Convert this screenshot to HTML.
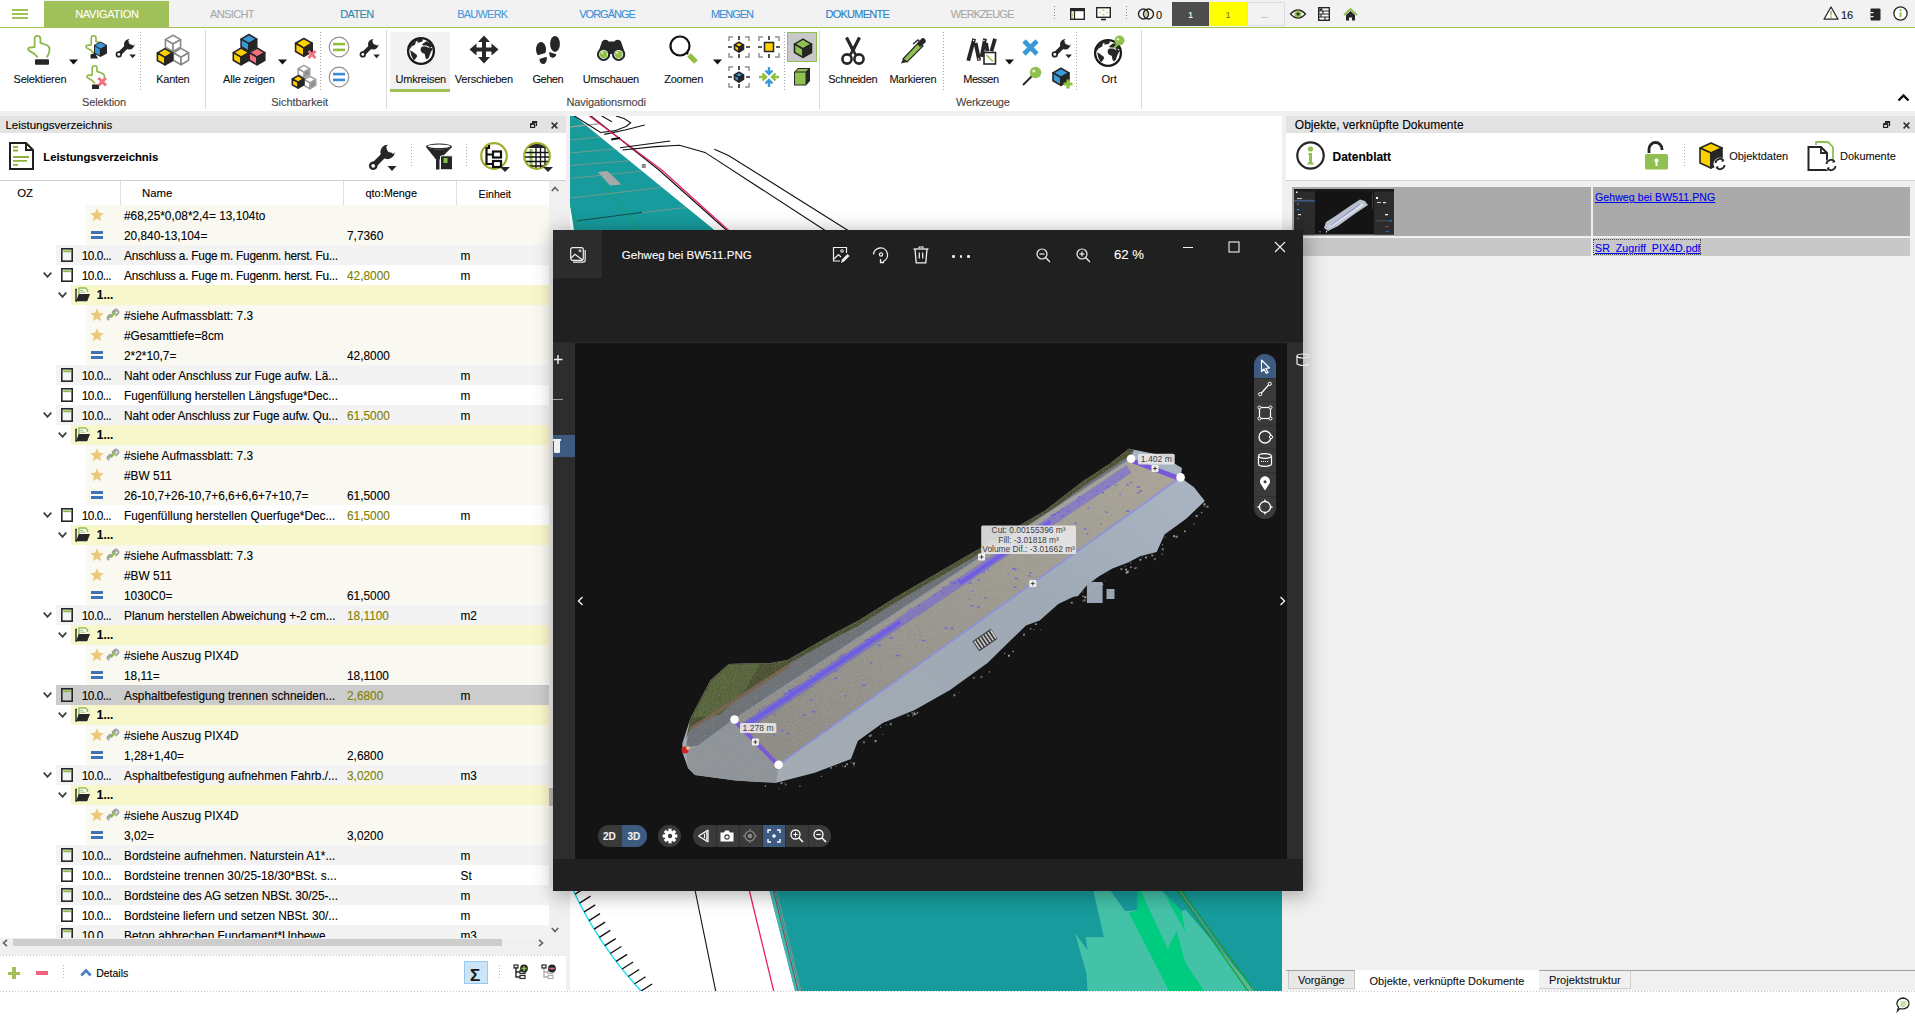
<!DOCTYPE html>
<html><head><meta charset="utf-8"><style>
html,body{margin:0;padding:0;}
body{width:1915px;height:1017px;overflow:hidden;position:relative;background:#fff;font-family:"Liberation Sans",sans-serif;}
.r{position:absolute;}
.t{position:absolute;white-space:nowrap;line-height:1;-webkit-text-stroke:0.1px currentColor;}
svg.r{overflow:visible;}
</style></head><body>
<svg width="0" height="0" style="position:absolute"><defs>
<symbol id="star" viewBox="0 0 14 14"><path d="M7 0.3 L8.9 4.8 L13.7 5.2 L10 8.4 L11.2 13.3 L7 10.6 L2.8 13.3 L4 8.4 L0.3 5.2 L5.1 4.8 Z" fill="#ecc87a"/></symbol>
<symbol id="link" viewBox="0 0 14 14"><path d="M3.2 12.3 L1.7 10.8 Q1 9.6 2 8.6 L4.6 6" stroke="#9a9a9a" stroke-width="1.6" fill="none"/><path d="M9.4 8 L12 5.4 Q13 4.4 12.3 3.2 L10.8 1.7 Q9.6 1 8.6 2 L6 4.6" stroke="#9a9a9a" stroke-width="1.6" fill="none"/><path d="M3.6 10.4 Q2.8 9.8 3.6 9 L9 3.6 Q9.8 2.8 10.4 3.6" stroke="#9a9a9a" stroke-width="1.4" fill="none"/><path d="M4.5 9.5 L9.5 4.5" stroke="#8cc04a" stroke-width="2.2"/></symbol>
<symbol id="chev" viewBox="0 0 9 6"><path d="M0.7 0.7 L4.5 4.8 L8.3 0.7" stroke="#404040" stroke-width="1.8" fill="none"/></symbol>
<symbol id="doc" viewBox="0 0 12 14"><rect x="0.8" y="0.8" width="10.4" height="12.4" fill="none" stroke="#262626" stroke-width="1.6"/><rect x="2.2" y="2.4" width="7.6" height="1.8" fill="#90b848"/></symbol>
<symbol id="folder" viewBox="0 0 16 15"><path d="M4 10 V1 H10.5 L12.5 3 V5" stroke="#90c050" stroke-width="1.4" fill="#fff"/><path d="M5.3 3.4 H8 M5.3 5.2 H10.5" stroke="#90c050" stroke-width="1"/><path d="M2 2.5 H1 V14 H2" stroke="#262626" stroke-width="1.4" fill="none"/><path d="M3.8 7 H15 L12.2 14.2 H1 Z" fill="#262626"/></symbol>
</defs></svg>
<div class="r" style="left:0px;top:0px;width:1915px;height:27px;background:#f2f2f2;"></div><div class="r" style="left:0px;top:0px;width:44px;height:27px;background:#ffffff;"></div><div class="r" style="left:0px;top:27px;width:1915px;height:1px;background:#a0c05a;"></div><div class="r" style="left:44px;top:1px;width:125px;height:27px;background:#a0c05a;"></div><div class="r" style="left:12px;top:9px;width:16px;height:2px;background:#a0c05a;"></div><div class="r" style="left:12px;top:13px;width:16px;height:2px;background:#a0c05a;"></div><div class="r" style="left:12px;top:17px;width:16px;height:2px;background:#a0c05a;"></div><div class="t" style="left:75.2px;top:8.59px;font-size:11px;color:#ffffff;font-weight:normal;letter-spacing:-0.271px;">NAVIGATION</div><div class="t" style="left:209.9px;top:8.59px;font-size:11px;color:#a8a8a8;font-weight:normal;letter-spacing:-0.597px;">ANSICHT</div><div class="t" style="left:340.2px;top:8.59px;font-size:11px;color:#2a8aa8;font-weight:normal;letter-spacing:-0.593px;">DATEN</div><div class="t" style="left:457.2px;top:8.59px;font-size:11px;color:#4a9ae0;font-weight:normal;letter-spacing:-0.774px;">BAUWERK</div><div class="t" style="left:579.2px;top:8.59px;font-size:11px;color:#3a8fd8;font-weight:normal;letter-spacing:-0.971px;">VORGÄNGE</div><div class="t" style="left:710.9px;top:8.59px;font-size:11px;color:#3a8fd8;font-weight:normal;letter-spacing:-1.030px;">MENGEN</div><div class="t" style="left:825.5px;top:8.59px;font-size:11px;color:#2d80c8;font-weight:normal;letter-spacing:-0.753px;">DOKUMENTE</div><div class="t" style="left:950.8px;top:8.59px;font-size:11px;color:#a8a8a8;font-weight:normal;letter-spacing:-0.933px;">WERKZEUGE</div><div class="r" style="left:0px;top:28px;width:1915px;height:83px;background:#ffffff;"></div><div class="r" style="left:0px;top:111px;width:1915px;height:5px;background:#f0f0f0;"></div><div class="r" style="left:205px;top:30px;width:1px;height:79px;background:#dadada;"></div><div class="r" style="left:386px;top:30px;width:1px;height:79px;background:#dadada;"></div><div class="r" style="left:819px;top:30px;width:1px;height:79px;background:#dadada;"></div><div class="r" style="left:1141px;top:30px;width:1px;height:79px;background:#dadada;"></div><div class="r" style="left:140px;top:32px;width:1px;height:58px;background:repeating-linear-gradient(to bottom,#a8a8a8 0 1px,transparent 1px 3px)"></div><div class="r" style="left:320px;top:32px;width:1px;height:58px;background:repeating-linear-gradient(to bottom,#a8a8a8 0 1px,transparent 1px 3px)"></div><div class="r" style="left:784px;top:32px;width:1px;height:58px;background:repeating-linear-gradient(to bottom,#a8a8a8 0 1px,transparent 1px 3px)"></div><div class="r" style="left:943px;top:32px;width:1px;height:58px;background:repeating-linear-gradient(to bottom,#a8a8a8 0 1px,transparent 1px 3px)"></div><div class="r" style="left:1076px;top:32px;width:1px;height:58px;background:repeating-linear-gradient(to bottom,#a8a8a8 0 1px,transparent 1px 3px)"></div><div class="r" style="left:390px;top:32px;width:60px;height:57px;background:#f2f2f2;"></div><div class="r" style="left:390px;top:88.7px;width:60px;height:3px;background:#a0c05a;"></div><div class="t" style="left:13.6px;top:73.99px;font-size:11px;color:#111;font-weight:normal;letter-spacing:-0.212px;">Selektieren</div><div class="t" style="left:156.3px;top:73.99px;font-size:11px;color:#111;font-weight:normal;letter-spacing:-0.294px;">Kanten</div><div class="t" style="left:223px;top:73.99px;font-size:11px;color:#111;font-weight:normal;letter-spacing:-0.192px;">Alle zeigen</div><div class="t" style="left:395.5px;top:73.99px;font-size:11px;color:#111;font-weight:normal;letter-spacing:-0.230px;">Umkreisen</div><div class="t" style="left:454.8px;top:73.99px;font-size:11px;color:#111;font-weight:normal;letter-spacing:-0.222px;">Verschieben</div><div class="t" style="left:532.6px;top:73.99px;font-size:11px;color:#111;font-weight:normal;letter-spacing:-0.525px;">Gehen</div><div class="t" style="left:582.8px;top:73.99px;font-size:11px;color:#111;font-weight:normal;letter-spacing:-0.288px;">Umschauen</div><div class="t" style="left:664.3px;top:73.99px;font-size:11px;color:#111;font-weight:normal;letter-spacing:-0.276px;">Zoomen</div><div class="t" style="left:828.3px;top:73.99px;font-size:11px;color:#111;font-weight:normal;letter-spacing:-0.343px;">Schneiden</div><div class="t" style="left:889.4px;top:73.99px;font-size:11px;color:#111;font-weight:normal;letter-spacing:-0.223px;">Markieren</div><div class="t" style="left:963.3px;top:73.99px;font-size:11px;color:#111;font-weight:normal;letter-spacing:-0.553px;">Messen</div><div class="t" style="left:1101.4px;top:73.99px;font-size:11px;color:#111;font-weight:normal;letter-spacing:0.008px;">Ort</div><div class="t" style="left:82px;top:97.09px;font-size:11px;color:#444;font-weight:normal;letter-spacing:-0.139px;">Selektion</div><div class="t" style="left:271.3px;top:97.09px;font-size:11px;color:#444;font-weight:normal;letter-spacing:-0.064px;">Sichtbarkeit</div><div class="t" style="left:566.5px;top:97.09px;font-size:11px;color:#444;font-weight:normal;letter-spacing:-0.141px;">Navigationsmodi</div><div class="t" style="left:956.1px;top:97.09px;font-size:11px;color:#444;font-weight:normal;letter-spacing:-0.204px;">Werkzeuge</div><svg class="r" style="left:69px;top:58.5px" width="9" height="6" viewBox="0 0 9 6"><path d="M0 0.5 H9 L4.5 5.5 Z" fill="#111"/></svg><svg class="r" style="left:278px;top:58.5px" width="9" height="6" viewBox="0 0 9 6"><path d="M0 0.5 H9 L4.5 5.5 Z" fill="#111"/></svg><svg class="r" style="left:713px;top:58.5px" width="9" height="6" viewBox="0 0 9 6"><path d="M0 0.5 H9 L4.5 5.5 Z" fill="#111"/></svg><svg class="r" style="left:1005px;top:58.5px" width="9" height="6" viewBox="0 0 9 6"><path d="M0 0.5 H9 L4.5 5.5 Z" fill="#111"/></svg><svg class="r" style="left:27px;top:35px" width="24" height="30" viewBox="0 0 24 30"><path d="M10.7 22.4 L7.2 18.6 Q3.5 16.8 1.5 15 Q0.5 13.2 2.5 12.6 L7.6 12 V3.8 Q7.6 0.9 10.5 0.9 Q13.4 0.9 13.4 3.8 V7.8 L19.6 10 Q22.6 11.3 22.6 14.5 Q22.4 18.5 19.8 22.4" fill="none" stroke="#90b848" stroke-width="1.8" stroke-linejoin="round"/><rect x="8" y="24.3" width="14" height="5.5" rx="1" fill="#262626"/></svg><svg class="r" style="left:85px;top:35px" width="23" height="24" viewBox="0 0 23 24"><g transform="scale(0.82)"><path d="M10.7 22.4 L7.2 18.6 Q3.5 16.8 1.5 15 Q0.5 13.2 2.5 12.6 L7.6 12 V3.8 Q7.6 0.9 10.5 0.9 Q13.4 0.9 13.4 3.8 V7.8 L19.6 10 Q22.6 11.3 22.6 14.5 Q22.4 18.5 19.8 22.4" fill="none" stroke="#90b848" stroke-width="2" stroke-linejoin="round"/></g><path d="M5.5 23.5 V19.5 L10 18 L13 23.5 Z" fill="#262626"/><path d="M9 10 L15.5 6.5 L22 10 V18.5 L15.5 22 L9 18.5 Z" fill="#262626"/><path d="M10 10.5 L15.5 7.5 L21 10.5 L15.5 13.5 Z" fill="#3a9ad8"/><path d="M10 11.5 L14.8 14.2 V20.5 L10 17.8 Z" fill="#3a9ad8"/></svg><svg class="r" style="left:86px;top:65px" width="22" height="24" viewBox="0 0 22 24"><g transform="scale(0.82)"><path d="M10.7 22.4 L7.2 18.6 Q3.5 16.8 1.5 15 Q0.5 13.2 2.5 12.6 L7.6 12 V3.8 Q7.6 0.9 10.5 0.9 Q13.4 0.9 13.4 3.8 V7.8 L19.6 10 Q22.6 11.3 22.6 14.5 Q22.4 18.5 19.8 22.4" fill="none" stroke="#90b848" stroke-width="2" stroke-linejoin="round"/></g><rect x="6" y="19.5" width="7" height="4.5" fill="#262626"/><path d="M12.5 13 L20 20.5 M20 13 L12.5 20.5" stroke="#f07080" stroke-width="3"/></svg><svg class="r" style="left:115px;top:37px" width="22" height="23" viewBox="0 0 22 23"><g transform="scale(0.733)"><path d="M5.5 23.5 L15 14" stroke="#262626" stroke-width="5.5" stroke-linecap="round"/><circle cx="5.2" cy="23.8" r="4.3" fill="#262626"/><circle cx="5.2" cy="23.8" r="1.9" fill="#fff"/><circle cx="19.5" cy="10" r="7.2" fill="#262626"/><circle cx="23" cy="6.3" r="4.3" fill="#fff"/><path d="M22 1 L29 8 L25 12 L18 5 Z" fill="#fff"/><path d="M19.5 24 H28.5 L24 29 Z" fill="#262626"/></g></svg><svg class="r" style="left:359px;top:37px" width="22" height="23" viewBox="0 0 22 23"><g transform="scale(0.733)"><path d="M5.5 23.5 L15 14" stroke="#262626" stroke-width="5.5" stroke-linecap="round"/><circle cx="5.2" cy="23.8" r="4.3" fill="#262626"/><circle cx="5.2" cy="23.8" r="1.9" fill="#fff"/><circle cx="19.5" cy="10" r="7.2" fill="#262626"/><circle cx="23" cy="6.3" r="4.3" fill="#fff"/><path d="M22 1 L29 8 L25 12 L18 5 Z" fill="#fff"/><path d="M19.5 24 H28.5 L24 29 Z" fill="#262626"/></g></svg><svg class="r" style="left:1051px;top:37px" width="22" height="23" viewBox="0 0 22 23"><g transform="scale(0.733)"><path d="M5.5 23.5 L15 14" stroke="#262626" stroke-width="5.5" stroke-linecap="round"/><circle cx="5.2" cy="23.8" r="4.3" fill="#262626"/><circle cx="5.2" cy="23.8" r="1.9" fill="#fff"/><circle cx="19.5" cy="10" r="7.2" fill="#262626"/><circle cx="23" cy="6.3" r="4.3" fill="#fff"/><path d="M22 1 L29 8 L25 12 L18 5 Z" fill="#fff"/><path d="M19.5 24 H28.5 L24 29 Z" fill="#262626"/></g></svg><svg class="r" style="left:156px;top:34px" width="34" height="32" viewBox="0 0 34 32"><polygon points="17,1.184000000000001 24.6,5.5920000000000005 17,10 9.4,5.5920000000000005" fill="#fff" stroke="#8a8a8a" stroke-width="1.6" stroke-linejoin="round"/><polygon points="9.4,5.5920000000000005 17,10 17,17.4936 9.4,13.0856" fill="#fff" stroke="#8a8a8a" stroke-width="1.6" stroke-linejoin="round"/><polygon points="24.6,5.5920000000000005 17,10 17,17.4936 24.6,13.0856" fill="#fff" stroke="#8a8a8a" stroke-width="1.6" stroke-linejoin="round"/><polygon points="25,14.384 32.6,18.792 25,23.2 17.4,18.792" fill="#fff" stroke="#8a8a8a" stroke-width="1.6" stroke-linejoin="round"/><polygon points="17.4,18.792 25,23.2 25,30.693599999999996 17.4,26.2856" fill="#fff" stroke="#8a8a8a" stroke-width="1.6" stroke-linejoin="round"/><polygon points="32.6,18.792 25,23.2 25,30.693599999999996 32.6,26.2856" fill="#fff" stroke="#8a8a8a" stroke-width="1.6" stroke-linejoin="round"/><polygon points="9,14.584 16.6,18.991999999999997 9,23.4 1.4000000000000004,18.991999999999997" fill="#ffd000" stroke="#262626" stroke-width="1.6" stroke-linejoin="round"/><polygon points="1.4000000000000004,18.991999999999997 9,23.4 9,30.8936 1.4000000000000004,26.485599999999998" fill="#ffd000" stroke="#262626" stroke-width="1.6" stroke-linejoin="round"/><polygon points="16.6,18.991999999999997 9,23.4 9,30.8936 16.6,26.485599999999998" fill="#262626" stroke="#262626" stroke-width="1.6" stroke-linejoin="round"/></svg><svg class="r" style="left:232px;top:34px" width="34" height="32" viewBox="0 0 34 32"><polygon points="16.9,0.5519999999999996 24.7,5.076 16.9,9.6 9.099999999999998,5.076" fill="#3a9ad8" stroke="#262626" stroke-width="1.6" stroke-linejoin="round"/><polygon points="9.099999999999998,5.076 16.9,9.6 16.9,17.290799999999997 9.099999999999998,12.7668" fill="#3a9ad8" stroke="#262626" stroke-width="1.6" stroke-linejoin="round"/><polygon points="24.7,5.076 16.9,9.6 16.9,17.290799999999997 24.7,12.7668" fill="#262626" stroke="#262626" stroke-width="1.6" stroke-linejoin="round"/><polygon points="9.1,14.052000000000001 16.9,18.576 9.1,23.1 1.2999999999999998,18.576" fill="#ffd000" stroke="#262626" stroke-width="1.6" stroke-linejoin="round"/><polygon points="1.2999999999999998,18.576 9.1,23.1 9.1,30.7908 1.2999999999999998,26.2668" fill="#ffd000" stroke="#262626" stroke-width="1.6" stroke-linejoin="round"/><polygon points="16.9,18.576 9.1,23.1 9.1,30.7908 16.9,26.2668" fill="#262626" stroke="#262626" stroke-width="1.6" stroke-linejoin="round"/><polygon points="25,14.052000000000001 32.8,18.576 25,23.1 17.2,18.576" fill="#f07080" stroke="#262626" stroke-width="1.6" stroke-linejoin="round"/><polygon points="17.2,18.576 25,23.1 25,30.7908 17.2,26.2668" fill="#f07080" stroke="#262626" stroke-width="1.6" stroke-linejoin="round"/><polygon points="32.8,18.576 25,23.1 25,30.7908 32.8,26.2668" fill="#262626" stroke="#262626" stroke-width="1.6" stroke-linejoin="round"/></svg><svg class="r" style="left:295px;top:37px" width="22" height="22" viewBox="0 0 22 22"><polygon points="8.9,1.4719999999999995 17.200000000000003,6.286 8.9,11.1 0.5999999999999996,6.286" fill="#ffd000" stroke="#262626" stroke-width="1.6" stroke-linejoin="round"/><polygon points="0.5999999999999996,6.286 8.9,11.1 8.9,19.2838 0.5999999999999996,14.4698" fill="#ffd000" stroke="#262626" stroke-width="1.6" stroke-linejoin="round"/><polygon points="17.200000000000003,6.286 8.9,11.1 8.9,19.2838 17.200000000000003,14.4698" fill="#262626" stroke="#262626" stroke-width="1.6" stroke-linejoin="round"/><path d="M13.5 14 L20.5 21 M20.5 14 L13.5 21" stroke="#f07080" stroke-width="2.6"/></svg><svg class="r" style="left:292px;top:65px" width="25" height="24" viewBox="0 0 25 24"><polygon points="11.9,0.3719999999999999 17.7,3.7359999999999998 11.9,7.1 6.1000000000000005,3.7359999999999998" fill="#fff" stroke="#a0a0a0" stroke-width="1.6" stroke-linejoin="round"/><polygon points="6.1000000000000005,3.7359999999999998 11.9,7.1 11.9,12.8188 6.1000000000000005,9.454799999999999" fill="#fff" stroke="#a0a0a0" stroke-width="1.6" stroke-linejoin="round"/><polygon points="17.7,3.7359999999999998 11.9,7.1 11.9,12.8188 17.7,9.454799999999999" fill="#909090" stroke="#a0a0a0" stroke-width="1.6" stroke-linejoin="round"/><polygon points="17.9,11.272 23.7,14.636 17.9,18 12.099999999999998,14.636" fill="#fff" stroke="#a0a0a0" stroke-width="1.6" stroke-linejoin="round"/><polygon points="12.099999999999998,14.636 17.9,18 17.9,23.7188 12.099999999999998,20.3548" fill="#fff" stroke="#a0a0a0" stroke-width="1.6" stroke-linejoin="round"/><polygon points="23.7,14.636 17.9,18 17.9,23.7188 23.7,20.3548" fill="#909090" stroke="#a0a0a0" stroke-width="1.6" stroke-linejoin="round"/><polygon points="6.1,10.671999999999999 11.899999999999999,14.035999999999998 6.1,17.4 0.2999999999999998,14.035999999999998" fill="#ffd000" stroke="#262626" stroke-width="1.6" stroke-linejoin="round"/><polygon points="0.2999999999999998,14.035999999999998 6.1,17.4 6.1,23.1188 0.2999999999999998,19.7548" fill="#ffd000" stroke="#262626" stroke-width="1.6" stroke-linejoin="round"/><polygon points="11.899999999999999,14.035999999999998 6.1,17.4 6.1,23.1188 11.899999999999999,19.7548" fill="#262626" stroke="#262626" stroke-width="1.6" stroke-linejoin="round"/></svg><svg class="r" style="left:328px;top:36px" width="22" height="22" viewBox="0 0 22 22"><circle cx="11" cy="11" r="9.8" fill="#fff" stroke="#909090" stroke-width="1.2"/><rect x="5" y="6.8" width="12" height="2.6" fill="#90c040"/><rect x="5" y="12.6" width="12" height="2.6" fill="#90c040"/></svg><svg class="r" style="left:328px;top:66px" width="22" height="22" viewBox="0 0 22 22"><circle cx="11" cy="11" r="9.8" fill="#fff" stroke="#909090" stroke-width="1.2"/><rect x="5" y="6.8" width="12" height="2.6" fill="#3a8ad8"/><rect x="5" y="12.6" width="12" height="2.6" fill="#3a8ad8"/></svg><svg class="r" style="left:407px;top:37px" width="28" height="28" viewBox="0 0 28 28"><circle cx="14" cy="14" r="12.9" fill="#fff" stroke="#1a1a1a" stroke-width="2.3"/><path d="M1.8 12.5 L3.2 8.5 L6 5 L10 2 L15 1.5 L15.8 3.2 L15 4.7 L10.6 5.8 L10.2 3.5 L8.7 5.1 L8.2 7.4 L4.5 9.5 L2.7 12.6 Z" fill="#262626"/><path d="M3.1 13.3 L5.3 14.4 L9.4 17.4 L10.2 19.3 L8.3 21.9 L6.8 23.4 L4.2 18.2 Z" fill="#262626"/><path d="M13.9 10.7 L15.4 9.6 L19.2 9.6 L21.4 10.7 L22.9 9.9 L25.9 11.8 L24 14.8 L22.9 17.4 L21.8 20.8 L19.9 22.6 L18.4 20.4 L17.7 16.7 L15.4 15.9 L13.6 13.7 Z" fill="#262626"/><path d="M15 7.3 L17.3 5.8 L19.2 4.3 L22.1 5.5 L25.1 7.3 L25.9 9.9 L22.9 9.9 L19.2 8.4 L16.2 8.4 Z" fill="#262626"/></svg><svg class="r" style="left:469px;top:35px" width="30" height="29" viewBox="0 0 30 29"><path d="M15 0.5 L21 7 H17 V12.5 H22.5 V8.5 L29.5 14.5 L22.5 20.5 V16.5 H17 V22 H21 L15 28.5 L9 22 H13 V16.5 H7.5 V20.5 L0.5 14.5 L7.5 8.5 V12.5 H13 V7 H9 Z" fill="#262626"/></svg><svg class="r" style="left:536px;top:35px" width="25" height="30" viewBox="0 0 25 30"><ellipse cx="5" cy="14.5" rx="5" ry="7.6" fill="#262626"/><path d="M-1 21 L11 17.5 L11 23 L-1 23 Z" fill="#fff"/><path d="M3.4 24 L10.6 21.8 Q11.5 26 9 28.5 Q6 30 4 27 Z" fill="#262626"/><ellipse cx="19" cy="8.9" rx="4.9" ry="8" fill="#262626"/><path d="M13 15.5 L25 19 L25 22 L13 22 Z" fill="#fff"/><path d="M13.2 17 L20.4 19.3 Q19.5 22.5 16.5 22.8 Q13 22.5 13.2 17 Z" fill="#262626"/></svg><svg class="r" style="left:597px;top:39px" width="29" height="23" viewBox="0 0 29 23"><path d="M0.8 15 L5 2.5 Q6.5 0.4 8.5 0.8 Q11 0.8 11.5 2.6 L17.5 2.6 Q18 0.8 20.5 0.8 Q22.5 0.4 24 2.5 L28.2 15 Z" fill="#262626"/><circle cx="6.6" cy="15.4" r="6.6" fill="#262626"/><circle cx="21.6" cy="15.4" r="6.6" fill="#262626"/><circle cx="6.6" cy="15.4" r="4.5" fill="#fff"/><circle cx="21.6" cy="15.4" r="4.5" fill="#fff"/><circle cx="6.6" cy="15.4" r="3.7" fill="#90c040"/><circle cx="21.6" cy="15.4" r="3.7" fill="#90c040"/><circle cx="5.2" cy="13.8" r="1" fill="#e8f4d8"/><circle cx="20.2" cy="13.8" r="1" fill="#e8f4d8"/></svg><svg class="r" style="left:669px;top:35px" width="30" height="30" viewBox="0 0 30 30"><circle cx="11" cy="11" r="9.5" fill="none" stroke="#111" stroke-width="2.2"/><path d="M17.5 17.5 L19 19" stroke="#111" stroke-width="2.5"/><path d="M20 20 L27 27" stroke="#90c040" stroke-width="5.2"/></svg><svg class="r" style="left:728px;top:36px" width="22" height="22" viewBox="0 0 22 22"><path d="M1 5 V1 H5 M17 1 H21 V5 M21 17 V21 H17 M5 21 H1 V17" stroke="#909090" stroke-width="1.5" fill="none"/><path d="M11 0 V4 M11 18 V22 M0 11 H4 M18 11 H22" stroke="#262626" stroke-width="1.6"/><polygon points="11,6.28 15.5,8.89 11,11.5 6.5,8.89" fill="#ffd000" stroke="#262626" stroke-width="1.6" stroke-linejoin="round"/><polygon points="6.5,8.89 11,11.5 11,15.937 6.5,13.327" fill="#ffd000" stroke="#262626" stroke-width="1.6" stroke-linejoin="round"/><polygon points="15.5,8.89 11,11.5 11,15.937 15.5,13.327" fill="#262626" stroke="#262626" stroke-width="1.6" stroke-linejoin="round"/></svg><svg class="r" style="left:758px;top:36px" width="22" height="22" viewBox="0 0 22 22"><path d="M1 5 V1 H5 M17 1 H21 V5 M21 17 V21 H17 M5 21 H1 V17" stroke="#909090" stroke-width="1.5" fill="none"/><path d="M11 0 V4 M11 18 V22 M0 11 H4 M18 11 H22" stroke="#262626" stroke-width="1.6"/><rect x="6.5" y="6.5" width="9" height="9" fill="#ffd000" stroke="#262626" stroke-width="1.5"/></svg><svg class="r" style="left:728px;top:66px" width="22" height="22" viewBox="0 0 22 22"><path d="M1 5 V1 H5 M17 1 H21 V5 M21 17 V21 H17 M5 21 H1 V17" stroke="#909090" stroke-width="1.5" fill="none"/><path d="M11 0 V4 M11 18 V22 M0 11 H4 M18 11 H22" stroke="#262626" stroke-width="1.6"/><polygon points="11,6.28 15.5,8.89 11,11.5 6.5,8.89" fill="#3a9ad8" stroke="#262626" stroke-width="1.6" stroke-linejoin="round"/><polygon points="6.5,8.89 11,11.5 11,15.937 6.5,13.327" fill="#3a9ad8" stroke="#262626" stroke-width="1.6" stroke-linejoin="round"/><polygon points="15.5,8.89 11,11.5 11,15.937 15.5,13.327" fill="#262626" stroke="#262626" stroke-width="1.6" stroke-linejoin="round"/></svg><svg class="r" style="left:758px;top:66px" width="22" height="22" viewBox="0 0 22 22"><path d="M11 1 V8 M7.5 4.5 L11 8 L14.5 4.5 M11 21 V14 M7.5 17.5 L11 14 L14.5 17.5" stroke="#3a9ad8" stroke-width="2.4" fill="none"/><path d="M1 11 H8 M4.5 7.5 L8 11 L4.5 14.5 M21 11 H14 M17.5 7.5 L14 11 L17.5 14.5" stroke="#90c040" stroke-width="2.4" fill="none"/></svg><div class="r" style="left:787px;top:32px;width:30px;height:30px;background:#c8c8c8;box-sizing:border-box;border:1px solid #90c050"></div><svg class="r" style="left:792px;top:37px" width="22" height="22" viewBox="0 0 22 22"><polygon points="11,2.1400000000000006 19.5,7.07 11,12 2.5,7.07" fill="#90c050" stroke="#262626" stroke-width="1.6" stroke-linejoin="round"/><polygon points="2.5,7.07 11,12 11,20.381 2.5,15.451" fill="#90c050" stroke="#262626" stroke-width="1.6" stroke-linejoin="round"/><polygon points="19.5,7.07 11,12 11,20.381 19.5,15.451" fill="#262626" stroke="#262626" stroke-width="1.6" stroke-linejoin="round"/></svg><svg class="r" style="left:792px;top:66px" width="20" height="21" viewBox="0 0 20 21"><path d="M2 6 L6 2 H18 V15 L14 19.5 H2 Z" fill="#262626"/><rect x="3" y="6.5" width="10.5" height="12" fill="#90c050"/><path d="M3.5 5.5 L6.5 3 H16.5 L13.5 5.5 Z" fill="#90c050"/></svg><svg class="r" style="left:841px;top:37px" width="24" height="28" viewBox="0 0 24 28"><path d="M5.5 0.5 L13 15 M18.5 0.5 L11 15" stroke="#262626" stroke-width="3.2"/><path d="M5 0.5 L12.5 14.5 L11.5 16 Z M19 0.5 L11.5 14.5 L12.5 16 Z" fill="#262626"/><circle cx="6" cy="22" r="4.6" fill="none" stroke="#262626" stroke-width="2.6"/><circle cx="18" cy="22" r="4.6" fill="none" stroke="#262626" stroke-width="2.6"/><path d="M9 18 L11 15 M15 18 L13 15" stroke="#262626" stroke-width="2.6"/></svg><svg class="r" style="left:900px;top:37px" width="27" height="27" viewBox="0 0 27 27"><path d="M3 22 L19 5 L23 9 L7 25 Z" fill="#90c050" stroke="#262626" stroke-width="1.2"/><path d="M17 7 L21.5 1.5 Q23.5 0.5 25 2 Q26.5 3.5 25.5 5.5 L20 10 Z" fill="#262626"/><path d="M3 22 L7 25 L1 26.5 Z" fill="#262626"/><path d="M13 7 L18 3 L19.5 4.5" stroke="#262626" stroke-width="1.4" fill="none"/></svg><svg class="r" style="left:966px;top:37px" width="31" height="28" viewBox="0 0 31 28"><path d="M2.2 23.7 L8.2 1.7 M9.6 6 L13.2 23.7 M15.6 19.8 L19 1.7 M20.1 6 L21.4 14.3 M25.4 14.3 L29 1.7" stroke="#262626" stroke-width="3.8" fill="none"/><circle cx="7.6" cy="3.5" r="0.8" fill="#fff"/><circle cx="17.9" cy="3.5" r="0.8" fill="#fff"/><circle cx="12.6" cy="22" r="0.8" fill="#fff"/><rect x="18" y="15.5" width="11.5" height="11.5" fill="#fff" stroke="#262626" stroke-width="1.6"/><path d="M20.5 18 L27 24.5" stroke="#90c040" stroke-width="1.5"/></svg><svg class="r" style="left:1021px;top:38px" width="19" height="19" viewBox="0 0 19 19"><path d="M3 3 L16 16 M16 3 L3 16" stroke="#3a9ad8" stroke-width="4.6"/></svg><svg class="r" style="left:1022px;top:66px" width="20" height="20" viewBox="0 0 20 20"><path d="M1 19 L10 10" stroke="#262626" stroke-width="1.8"/><circle cx="13.5" cy="6.5" r="5.8" fill="#90c050"/><circle cx="11.8" cy="5" r="1.6" fill="#e0f0c0"/></svg><svg class="r" style="left:1052px;top:68px" width="21" height="21" viewBox="0 0 21 21"><polygon points="9,0.22000000000000064 17,4.86 9,9.5 1,4.86" fill="#3a9ad8" stroke="#262626" stroke-width="1.6" stroke-linejoin="round"/><polygon points="1,4.86 9,9.5 9,17.387999999999998 1,12.748" fill="#3a9ad8" stroke="#262626" stroke-width="1.6" stroke-linejoin="round"/><polygon points="17,4.86 9,9.5 9,17.387999999999998 17,12.748" fill="#262626" stroke="#262626" stroke-width="1.6" stroke-linejoin="round"/><path d="M16 11.5 V20.5 M11.5 16 H20.5" stroke="#90c040" stroke-width="3.2"/></svg><svg class="r" style="left:1094px;top:35px" width="31" height="30" viewBox="0 0 31 30"><g transform="translate(0 4)"><circle cx="14" cy="14" r="12.9" fill="#fff" stroke="#1a1a1a" stroke-width="2.3"/><path d="M1.8 12.5 L3.2 8.5 L6 5 L10 2 L15 1.5 L15.8 3.2 L15 4.7 L10.6 5.8 L10.2 3.5 L8.7 5.1 L8.2 7.4 L4.5 9.5 L2.7 12.6 Z" fill="#262626"/><path d="M3.1 13.3 L5.3 14.4 L9.4 17.4 L10.2 19.3 L8.3 21.9 L6.8 23.4 L4.2 18.2 Z" fill="#262626"/><path d="M13.9 10.7 L15.4 9.6 L19.2 9.6 L21.4 10.7 L22.9 9.9 L25.9 11.8 L24 14.8 L22.9 17.4 L21.8 20.8 L19.9 22.6 L18.4 20.4 L17.7 16.7 L15.4 15.9 L13.6 13.7 Z" fill="#262626"/><path d="M15 7.3 L17.3 5.8 L19.2 4.3 L22.1 5.5 L25.1 7.3 L25.9 9.9 L22.9 9.9 L19.2 8.4 L16.2 8.4 Z" fill="#262626"/></g><path d="M20 13 L24 9" stroke="#90c050" stroke-width="2"/><circle cx="25.5" cy="5.5" r="5" fill="#90c050"/><circle cx="24" cy="4.3" r="1.3" fill="#e0f0c0"/></svg><svg class="r" style="left:1897px;top:93px" width="13" height="9" viewBox="0 0 13 9"><path d="M1.5 7.5 L6.5 2.5 L11.5 7.5" stroke="#111" stroke-width="2.4" fill="none"/></svg><div class="r" style="left:0px;top:116px;width:566px;height:17px;background:#e3e3e3;"></div><div class="t" style="left:5.4px;top:120.47px;font-size:11.5px;color:#000;font-weight:normal;">Leistungsverzeichnis</div><div class="r" style="left:0px;top:133px;width:566px;height:47px;background:#ffffff;"></div><div class="r" style="left:0px;top:180px;width:566px;height:1px;background:#d0d0d0;"></div><div class="r" style="left:0px;top:181px;width:549px;height:757px;background:#ffffff;"></div><div class="r" style="left:549px;top:181px;width:17px;height:757px;background:#f0f0f0;"></div><div class="r" style="left:0px;top:938px;width:566px;height:17px;background:#f0f0f0;"></div><div class="r" style="left:0px;top:955px;width:566px;height:36px;background:#ffffff;"></div><div class="r" style="left:566px;top:116px;width:4px;height:875px;background:#f0f0f0;"></div><div class="r" style="left:86px;top:205px;width:463px;height:20px;background:#f9f9f1;"></div><div class="r" style="left:86px;top:225px;width:463px;height:20px;background:#f9f9f1;"></div><div class="r" style="left:56px;top:245px;width:493px;height:20px;background:#f3f3f3;"></div><div class="r" style="left:56px;top:265px;width:493px;height:20px;background:#ffffff;"></div><div class="r" style="left:71px;top:285px;width:478px;height:20px;background:#f8f7cc;"></div><div class="r" style="left:86px;top:305px;width:463px;height:20px;background:#f9f9f1;"></div><div class="r" style="left:86px;top:325px;width:463px;height:20px;background:#f9f9f1;"></div><div class="r" style="left:86px;top:345px;width:463px;height:20px;background:#f9f9f1;"></div><div class="r" style="left:56px;top:365px;width:493px;height:20px;background:#f3f3f3;"></div><div class="r" style="left:56px;top:385px;width:493px;height:20px;background:#ffffff;"></div><div class="r" style="left:56px;top:405px;width:493px;height:20px;background:#f3f3f3;"></div><div class="r" style="left:71px;top:425px;width:478px;height:20px;background:#f8f7cc;"></div><div class="r" style="left:86px;top:445px;width:463px;height:20px;background:#f9f9f1;"></div><div class="r" style="left:86px;top:465px;width:463px;height:20px;background:#f9f9f1;"></div><div class="r" style="left:86px;top:485px;width:463px;height:20px;background:#f9f9f1;"></div><div class="r" style="left:56px;top:505px;width:493px;height:20px;background:#ffffff;"></div><div class="r" style="left:71px;top:525px;width:478px;height:20px;background:#f8f7cc;"></div><div class="r" style="left:86px;top:545px;width:463px;height:20px;background:#f9f9f1;"></div><div class="r" style="left:86px;top:565px;width:463px;height:20px;background:#f9f9f1;"></div><div class="r" style="left:86px;top:585px;width:463px;height:20px;background:#f9f9f1;"></div><div class="r" style="left:56px;top:605px;width:493px;height:20px;background:#f3f3f3;"></div><div class="r" style="left:71px;top:625px;width:478px;height:20px;background:#f8f7cc;"></div><div class="r" style="left:86px;top:645px;width:463px;height:20px;background:#f9f9f1;"></div><div class="r" style="left:86px;top:665px;width:463px;height:20px;background:#f9f9f1;"></div><div class="r" style="left:56px;top:685px;width:493px;height:20px;background:#cccccc;"></div><div class="r" style="left:71px;top:705px;width:478px;height:20px;background:#f8f7cc;"></div><div class="r" style="left:86px;top:725px;width:463px;height:20px;background:#f9f9f1;"></div><div class="r" style="left:86px;top:745px;width:463px;height:20px;background:#f9f9f1;"></div><div class="r" style="left:56px;top:765px;width:493px;height:20px;background:#f3f3f3;"></div><div class="r" style="left:71px;top:785px;width:478px;height:20px;background:#f8f7cc;"></div><div class="r" style="left:86px;top:805px;width:463px;height:20px;background:#f9f9f1;"></div><div class="r" style="left:86px;top:825px;width:463px;height:20px;background:#f9f9f1;"></div><div class="r" style="left:56px;top:845px;width:493px;height:20px;background:#f3f3f3;"></div><div class="r" style="left:56px;top:865px;width:493px;height:20px;background:#ffffff;"></div><div class="r" style="left:56px;top:885px;width:493px;height:20px;background:#f3f3f3;"></div><div class="r" style="left:56px;top:905px;width:493px;height:20px;background:#ffffff;"></div><div class="r" style="left:56px;top:925px;width:493px;height:13px;background:#f3f3f3;"></div><div class="r" style="left:0;top:205px;width:549px;height:733px;overflow:hidden"><svg class="r" style="left:90px;top:3px" width="14" height="14"><use href="#star"/></svg><div class="t" style="left:124px;top:5.87px;font-size:11.85px;color:#000;font-weight:normal;">#68,25*0,08*2,4= 13,104to</div><div class="r" style="left:91px;top:26px;width:12px;height:3px;background:#3f75b8"></div><div class="r" style="left:91px;top:31px;width:12px;height:3px;background:#3f75b8"></div><div class="t" style="left:124px;top:25.87px;font-size:11.85px;color:#000;font-weight:normal;">20,840-13,104=</div><div class="t" style="left:347px;top:25.87px;font-size:11.85px;color:#000;font-weight:normal;">7,7360</div><svg class="r" style="left:61px;top:43px" width="12" height="14"><use href="#doc"/></svg><div class="t" style="left:81.7px;top:45.87px;font-size:11.85px;color:#000;font-weight:normal;letter-spacing:-0.491px;">10.0...</div><div class="t" style="left:124px;top:45.87px;font-size:11.85px;color:#000;font-weight:normal;letter-spacing:-0.242px;">Anschluss a. Fuge m. Fugenm. herst. Fu...</div><div class="t" style="left:460.5px;top:45.87px;font-size:11.85px;color:#000;font-weight:normal;">m</div><svg class="r" style="left:43px;top:67px" width="9" height="6"><use href="#chev"/></svg><svg class="r" style="left:61px;top:63px" width="12" height="14"><use href="#doc"/></svg><div class="t" style="left:81.7px;top:65.87px;font-size:11.85px;color:#000;font-weight:normal;letter-spacing:-0.491px;">10.0...</div><div class="t" style="left:124px;top:65.87px;font-size:11.85px;color:#000;font-weight:normal;letter-spacing:-0.242px;">Anschluss a. Fuge m. Fugenm. herst. Fu...</div><div class="t" style="left:347px;top:65.87px;font-size:11.85px;color:#808000;font-weight:normal;">42,8000</div><div class="t" style="left:460.5px;top:65.87px;font-size:11.85px;color:#000;font-weight:normal;">m</div><svg class="r" style="left:58px;top:87px" width="9" height="6"><use href="#chev"/></svg><svg class="r" style="left:75px;top:82px" width="16" height="15"><use href="#folder"/></svg><div class="t" style="left:96.8px;top:85.07px;font-size:11.85px;color:#000;font-weight:bold;">1...</div><svg class="r" style="left:90px;top:103px" width="14" height="14"><use href="#star"/></svg><svg class="r" style="left:106px;top:103px" width="14" height="14"><use href="#link"/></svg><div class="t" style="left:124px;top:105.87px;font-size:11.85px;color:#000;font-weight:normal;">#siehe Aufmassblatt: 7.3</div><svg class="r" style="left:90px;top:123px" width="14" height="14"><use href="#star"/></svg><div class="t" style="left:124px;top:125.87px;font-size:11.85px;color:#000;font-weight:normal;">#Gesamttiefe=8cm</div><div class="r" style="left:91px;top:146px;width:12px;height:3px;background:#3f75b8"></div><div class="r" style="left:91px;top:151px;width:12px;height:3px;background:#3f75b8"></div><div class="t" style="left:124px;top:145.87px;font-size:11.85px;color:#000;font-weight:normal;">2*2*10,7=</div><div class="t" style="left:347px;top:145.87px;font-size:11.85px;color:#000;font-weight:normal;">42,8000</div><svg class="r" style="left:61px;top:163px" width="12" height="14"><use href="#doc"/></svg><div class="t" style="left:81.7px;top:165.87px;font-size:11.85px;color:#000;font-weight:normal;letter-spacing:-0.491px;">10.0...</div><div class="t" style="left:124px;top:165.87px;font-size:11.85px;color:#000;font-weight:normal;letter-spacing:-0.051px;">Naht oder Anschluss zur Fuge aufw. Lä...</div><div class="t" style="left:460.5px;top:165.87px;font-size:11.85px;color:#000;font-weight:normal;">m</div><svg class="r" style="left:61px;top:183px" width="12" height="14"><use href="#doc"/></svg><div class="t" style="left:81.7px;top:185.87px;font-size:11.85px;color:#000;font-weight:normal;letter-spacing:-0.491px;">10.0...</div><div class="t" style="left:124px;top:185.87px;font-size:11.85px;color:#000;font-weight:normal;letter-spacing:-0.085px;">Fugenfüllung herstellen Längsfuge*Dec...</div><div class="t" style="left:460.5px;top:185.87px;font-size:11.85px;color:#000;font-weight:normal;">m</div><svg class="r" style="left:43px;top:207px" width="9" height="6"><use href="#chev"/></svg><svg class="r" style="left:61px;top:203px" width="12" height="14"><use href="#doc"/></svg><div class="t" style="left:81.7px;top:205.87px;font-size:11.85px;color:#000;font-weight:normal;letter-spacing:-0.491px;">10.0...</div><div class="t" style="left:124px;top:205.87px;font-size:11.85px;color:#000;font-weight:normal;letter-spacing:-0.117px;">Naht oder Anschluss zur Fuge aufw. Qu...</div><div class="t" style="left:347px;top:205.87px;font-size:11.85px;color:#808000;font-weight:normal;">61,5000</div><div class="t" style="left:460.5px;top:205.87px;font-size:11.85px;color:#000;font-weight:normal;">m</div><svg class="r" style="left:58px;top:227px" width="9" height="6"><use href="#chev"/></svg><svg class="r" style="left:75px;top:222px" width="16" height="15"><use href="#folder"/></svg><div class="t" style="left:96.8px;top:225.07px;font-size:11.85px;color:#000;font-weight:bold;">1...</div><svg class="r" style="left:90px;top:243px" width="14" height="14"><use href="#star"/></svg><svg class="r" style="left:106px;top:243px" width="14" height="14"><use href="#link"/></svg><div class="t" style="left:124px;top:245.87px;font-size:11.85px;color:#000;font-weight:normal;">#siehe Aufmassblatt: 7.3</div><svg class="r" style="left:90px;top:263px" width="14" height="14"><use href="#star"/></svg><div class="t" style="left:124px;top:265.87px;font-size:11.85px;color:#000;font-weight:normal;">#BW 511</div><div class="r" style="left:91px;top:286px;width:12px;height:3px;background:#3f75b8"></div><div class="r" style="left:91px;top:291px;width:12px;height:3px;background:#3f75b8"></div><div class="t" style="left:124px;top:285.87px;font-size:11.85px;color:#000;font-weight:normal;">26-10,7+26-10,7+6,6+6,6+7+10,7=</div><div class="t" style="left:347px;top:285.87px;font-size:11.85px;color:#000;font-weight:normal;">61,5000</div><svg class="r" style="left:43px;top:307px" width="9" height="6"><use href="#chev"/></svg><svg class="r" style="left:61px;top:303px" width="12" height="14"><use href="#doc"/></svg><div class="t" style="left:81.7px;top:305.87px;font-size:11.85px;color:#000;font-weight:normal;letter-spacing:-0.491px;">10.0...</div><div class="t" style="left:124px;top:305.87px;font-size:11.85px;color:#000;font-weight:normal;">Fugenfüllung herstellen Querfuge*Dec...</div><div class="t" style="left:347px;top:305.87px;font-size:11.85px;color:#808000;font-weight:normal;">61,5000</div><div class="t" style="left:460.5px;top:305.87px;font-size:11.85px;color:#000;font-weight:normal;">m</div><svg class="r" style="left:58px;top:327px" width="9" height="6"><use href="#chev"/></svg><svg class="r" style="left:75px;top:322px" width="16" height="15"><use href="#folder"/></svg><div class="t" style="left:96.8px;top:325.07px;font-size:11.85px;color:#000;font-weight:bold;">1...</div><svg class="r" style="left:90px;top:343px" width="14" height="14"><use href="#star"/></svg><svg class="r" style="left:106px;top:343px" width="14" height="14"><use href="#link"/></svg><div class="t" style="left:124px;top:345.87px;font-size:11.85px;color:#000;font-weight:normal;">#siehe Aufmassblatt: 7.3</div><svg class="r" style="left:90px;top:363px" width="14" height="14"><use href="#star"/></svg><div class="t" style="left:124px;top:365.87px;font-size:11.85px;color:#000;font-weight:normal;">#BW 511</div><div class="r" style="left:91px;top:386px;width:12px;height:3px;background:#3f75b8"></div><div class="r" style="left:91px;top:391px;width:12px;height:3px;background:#3f75b8"></div><div class="t" style="left:124px;top:385.87px;font-size:11.85px;color:#000;font-weight:normal;">1030C0=</div><div class="t" style="left:347px;top:385.87px;font-size:11.85px;color:#000;font-weight:normal;">61,5000</div><svg class="r" style="left:43px;top:407px" width="9" height="6"><use href="#chev"/></svg><svg class="r" style="left:61px;top:403px" width="12" height="14"><use href="#doc"/></svg><div class="t" style="left:81.7px;top:405.87px;font-size:11.85px;color:#000;font-weight:normal;letter-spacing:-0.491px;">10.0...</div><div class="t" style="left:124px;top:405.87px;font-size:11.85px;color:#000;font-weight:normal;">Planum herstellen Abweichung +-2 cm...</div><div class="t" style="left:347px;top:405.87px;font-size:11.85px;color:#808000;font-weight:normal;">18,1100</div><div class="t" style="left:460.5px;top:405.87px;font-size:11.85px;color:#000;font-weight:normal;">m2</div><svg class="r" style="left:58px;top:427px" width="9" height="6"><use href="#chev"/></svg><svg class="r" style="left:75px;top:422px" width="16" height="15"><use href="#folder"/></svg><div class="t" style="left:96.8px;top:425.07px;font-size:11.85px;color:#000;font-weight:bold;">1...</div><svg class="r" style="left:90px;top:443px" width="14" height="14"><use href="#star"/></svg><svg class="r" style="left:106px;top:443px" width="14" height="14"><use href="#link"/></svg><div class="t" style="left:124px;top:445.87px;font-size:11.85px;color:#000;font-weight:normal;">#siehe Auszug PIX4D</div><div class="r" style="left:91px;top:466px;width:12px;height:3px;background:#3f75b8"></div><div class="r" style="left:91px;top:471px;width:12px;height:3px;background:#3f75b8"></div><div class="t" style="left:124px;top:465.87px;font-size:11.85px;color:#000;font-weight:normal;">18,11=</div><div class="t" style="left:347px;top:465.87px;font-size:11.85px;color:#000;font-weight:normal;">18,1100</div><svg class="r" style="left:43px;top:487px" width="9" height="6"><use href="#chev"/></svg><svg class="r" style="left:61px;top:483px" width="12" height="14"><use href="#doc"/></svg><div class="t" style="left:81.7px;top:485.87px;font-size:11.85px;color:#000;font-weight:normal;letter-spacing:-0.491px;">10.0...</div><div class="t" style="left:124px;top:485.87px;font-size:11.85px;color:#000;font-weight:normal;">Asphaltbefestigung trennen schneiden...</div><div class="t" style="left:347px;top:485.87px;font-size:11.85px;color:#808000;font-weight:normal;">2,6800</div><div class="t" style="left:460.5px;top:485.87px;font-size:11.85px;color:#000;font-weight:normal;">m</div><svg class="r" style="left:58px;top:507px" width="9" height="6"><use href="#chev"/></svg><svg class="r" style="left:75px;top:502px" width="16" height="15"><use href="#folder"/></svg><div class="t" style="left:96.8px;top:505.07px;font-size:11.85px;color:#000;font-weight:bold;">1...</div><svg class="r" style="left:90px;top:523px" width="14" height="14"><use href="#star"/></svg><svg class="r" style="left:106px;top:523px" width="14" height="14"><use href="#link"/></svg><div class="t" style="left:124px;top:525.87px;font-size:11.85px;color:#000;font-weight:normal;">#siehe Auszug PIX4D</div><div class="r" style="left:91px;top:546px;width:12px;height:3px;background:#3f75b8"></div><div class="r" style="left:91px;top:551px;width:12px;height:3px;background:#3f75b8"></div><div class="t" style="left:124px;top:545.87px;font-size:11.85px;color:#000;font-weight:normal;">1,28+1,40=</div><div class="t" style="left:347px;top:545.87px;font-size:11.85px;color:#000;font-weight:normal;">2,6800</div><svg class="r" style="left:43px;top:567px" width="9" height="6"><use href="#chev"/></svg><svg class="r" style="left:61px;top:563px" width="12" height="14"><use href="#doc"/></svg><div class="t" style="left:81.7px;top:565.87px;font-size:11.85px;color:#000;font-weight:normal;letter-spacing:-0.491px;">10.0...</div><div class="t" style="left:124px;top:565.87px;font-size:11.85px;color:#000;font-weight:normal;letter-spacing:-0.003px;">Asphaltbefestigung aufnehmen Fahrb./...</div><div class="t" style="left:347px;top:565.87px;font-size:11.85px;color:#808000;font-weight:normal;">3,0200</div><div class="t" style="left:460.5px;top:565.87px;font-size:11.85px;color:#000;font-weight:normal;">m3</div><svg class="r" style="left:58px;top:587px" width="9" height="6"><use href="#chev"/></svg><svg class="r" style="left:75px;top:582px" width="16" height="15"><use href="#folder"/></svg><div class="t" style="left:96.8px;top:585.07px;font-size:11.85px;color:#000;font-weight:bold;">1...</div><svg class="r" style="left:90px;top:603px" width="14" height="14"><use href="#star"/></svg><svg class="r" style="left:106px;top:603px" width="14" height="14"><use href="#link"/></svg><div class="t" style="left:124px;top:605.87px;font-size:11.85px;color:#000;font-weight:normal;">#siehe Auszug PIX4D</div><div class="r" style="left:91px;top:626px;width:12px;height:3px;background:#3f75b8"></div><div class="r" style="left:91px;top:631px;width:12px;height:3px;background:#3f75b8"></div><div class="t" style="left:124px;top:625.87px;font-size:11.85px;color:#000;font-weight:normal;">3,02=</div><div class="t" style="left:347px;top:625.87px;font-size:11.85px;color:#000;font-weight:normal;">3,0200</div><svg class="r" style="left:61px;top:643px" width="12" height="14"><use href="#doc"/></svg><div class="t" style="left:81.7px;top:645.87px;font-size:11.85px;color:#000;font-weight:normal;letter-spacing:-0.491px;">10.0...</div><div class="t" style="left:124px;top:645.87px;font-size:11.85px;color:#000;font-weight:normal;">Bordsteine aufnehmen. Naturstein A1*...</div><div class="t" style="left:460.5px;top:645.87px;font-size:11.85px;color:#000;font-weight:normal;">m</div><svg class="r" style="left:61px;top:663px" width="12" height="14"><use href="#doc"/></svg><div class="t" style="left:81.7px;top:665.87px;font-size:11.85px;color:#000;font-weight:normal;letter-spacing:-0.491px;">10.0...</div><div class="t" style="left:124px;top:665.87px;font-size:11.85px;color:#000;font-weight:normal;">Bordsteine trennen 30/25-18/30*BSt. s...</div><div class="t" style="left:460.5px;top:665.87px;font-size:11.85px;color:#000;font-weight:normal;">St</div><svg class="r" style="left:61px;top:683px" width="12" height="14"><use href="#doc"/></svg><div class="t" style="left:81.7px;top:685.87px;font-size:11.85px;color:#000;font-weight:normal;letter-spacing:-0.491px;">10.0...</div><div class="t" style="left:124px;top:685.87px;font-size:11.85px;color:#000;font-weight:normal;letter-spacing:-0.101px;">Bordsteine des AG setzen NBSt. 30/25-...</div><div class="t" style="left:460.5px;top:685.87px;font-size:11.85px;color:#000;font-weight:normal;">m</div><svg class="r" style="left:61px;top:703px" width="12" height="14"><use href="#doc"/></svg><div class="t" style="left:81.7px;top:705.87px;font-size:11.85px;color:#000;font-weight:normal;letter-spacing:-0.491px;">10.0...</div><div class="t" style="left:124px;top:705.87px;font-size:11.85px;color:#000;font-weight:normal;letter-spacing:-0.080px;">Bordsteine liefern und setzen NBSt. 30/...</div><div class="t" style="left:460.5px;top:705.87px;font-size:11.85px;color:#000;font-weight:normal;">m</div><svg class="r" style="left:61px;top:723px" width="12" height="14"><use href="#doc"/></svg><div class="t" style="left:81.7px;top:725.87px;font-size:11.85px;color:#000;font-weight:normal;letter-spacing:-0.491px;">10.0...</div><div class="t" style="left:124px;top:725.87px;font-size:11.85px;color:#000;font-weight:normal;">Beton abbrechen Fundament*Unbewe...</div><div class="t" style="left:460.5px;top:725.87px;font-size:11.85px;color:#000;font-weight:normal;">m3</div></div><svg class="r" style="left:529.5px;top:121px" width="7" height="7" viewBox="0 0 7 7"><path d="M2.5 0.5 H6.5 V4.5 H5.5" stroke="#262626" stroke-width="1.2" fill="none"/><path d="M2 1 H6.3" stroke="#262626" stroke-width="2"/><rect x="0.6" y="2.8" width="4" height="3.6" fill="none" stroke="#262626" stroke-width="1.2"/><path d="M0.6 3.2 H4.6" stroke="#262626" stroke-width="1.6"/></svg><svg class="r" style="left:551px;top:122px" width="7" height="7" viewBox="0 0 7 7"><path d="M0.6 0.6 L6.4 6.4 M6.4 0.6 L0.6 6.4" stroke="#333" stroke-width="1.5"/></svg><svg class="r" style="left:9px;top:142px" width="25" height="28" viewBox="0 0 25 28"><path d="M1 1 H17 L24 8 V27 H1 Z" fill="#fff" stroke="#1f1f1f" stroke-width="2"/><path d="M17 1 V8 H24" fill="none" stroke="#1f1f1f" stroke-width="2"/><path d="M4 5 H9 M4 8.5 H9 M4 15 H20 M4 18.8 H18 M4 22.8 H9" stroke="#90b040" stroke-width="1.8"/></svg><div class="t" style="left:43.3px;top:152.13px;font-size:11.3px;color:#000;font-weight:bold;">Leistungsverzeichnis</div><svg class="r" style="left:368px;top:142px" width="30" height="30" viewBox="0 0 30 30"><path d="M5.5 23.5 L15 14" stroke="#262626" stroke-width="5.5" stroke-linecap="round"/><circle cx="5.2" cy="23.8" r="4.3" fill="#262626"/><circle cx="5.2" cy="23.8" r="1.9" fill="#fff"/><circle cx="19.5" cy="10" r="7.2" fill="#262626"/><circle cx="23" cy="6.3" r="4.3" fill="#fff"/><path d="M22 1 L29 8 L25 12 L18 5 Z" fill="#fff"/><path d="M19.5 24 H28.5 L24 29 Z" fill="#262626"/></svg><div class="r" style="left:411px;top:144px;width:1px;height:22px;background:repeating-linear-gradient(to bottom,#b0b0b0 0 1px,transparent 1px 3px)"></div><svg class="r" style="left:425px;top:143px" width="29" height="28" viewBox="0 0 29 28"><ellipse cx="14" cy="3.5" rx="13" ry="3" fill="#262626"/><ellipse cx="14" cy="3.3" rx="11.3" ry="1.8" fill="#fff"/><path d="M1 4 L11 16.5 V26.5 H14.5 V16.5 L27 4 Q14 9 1 4 Z" fill="#262626"/><rect x="15.5" y="12.8" width="12" height="14" rx="1.2" fill="#262626" stroke="#fff" stroke-width="1"/><rect x="18.5" y="15" width="4" height="5" fill="#8cc04a"/></svg><div class="r" style="left:466px;top:144px;width:1px;height:22px;background:repeating-linear-gradient(to bottom,#b0b0b0 0 1px,transparent 1px 3px)"></div><svg class="r" style="left:480px;top:142px" width="31" height="31" viewBox="0 0 31 31"><circle cx="14" cy="14" r="12.8" fill="#fff" stroke="#a3ac2c" stroke-width="2.2"/><path d="M9 3 V6 H6.5 V22 H13 M6.5 12.5 H13" stroke="#111" stroke-width="2.2" fill="none"/><rect x="13" y="9.5" width="8" height="6" fill="none" stroke="#111" stroke-width="2.2"/><rect x="13" y="19" width="8" height="6" fill="none" stroke="#111" stroke-width="2.2"/><path d="M20 25 H30 L25 30 Z" fill="#262626"/></svg><svg class="r" style="left:523px;top:142px" width="31" height="31" viewBox="0 0 31 31"><defs><clipPath id="gc"><circle cx="14" cy="14" r="12"/></clipPath></defs><circle cx="14" cy="14" r="12.8" fill="#fff" stroke="#a3ac2c" stroke-width="2.2"/><g clip-path="url(#gc)"><rect x="0" y="0" width="28" height="6" fill="#262626"/><rect x="6.5" y="7" width="3" height="20" fill="#8cc04a"/><path d="M2 10.5 H27 M2 15 H27 M2 19.5 H27 M2 24 H27 M13 6 V28 M17.5 6 V28 M22 6 V28" stroke="#111" stroke-width="1.3"/></g><path d="M20 25 H30 L25 30 Z" fill="#262626"/></svg><div class="r" style="left:120px;top:181px;width:1px;height:24px;background:#e0e0e0;"></div><div class="r" style="left:343px;top:181px;width:1px;height:24px;background:#e0e0e0;"></div><div class="r" style="left:456px;top:181px;width:1px;height:24px;background:#e0e0e0;"></div><div class="t" style="left:17.2px;top:187.95px;font-size:11.4px;color:#000;font-weight:normal;">OZ</div><div class="t" style="left:142px;top:187.95px;font-size:11.4px;color:#000;font-weight:normal;">Name</div><div class="t" style="left:365.5px;top:188.37px;font-size:10.9px;color:#000;font-weight:normal;">qto:Menge</div><div class="t" style="left:478.6px;top:188.63px;font-size:10.6px;color:#000;font-weight:normal;">Einheit</div><svg class="r" style="left:551px;top:186px" width="8" height="6" viewBox="0 0 8 6"><path d="M0.8 5 L4 1.5 L7.2 5" stroke="#606060" stroke-width="1.6" fill="none"/></svg><svg class="r" style="left:551px;top:927px" width="8" height="6" viewBox="0 0 8 6"><path d="M0.8 1 L4 4.5 L7.2 1" stroke="#606060" stroke-width="1.6" fill="none"/></svg><div class="r" style="left:549px;top:788px;width:4px;height:18px;background:#bdbdbd;"></div><div class="r" style="left:13px;top:939px;width:489px;height:7px;background:#cdcdcd;"></div><svg class="r" style="left:2px;top:939px" width="6" height="8" viewBox="0 0 6 8"><path d="M5 0.8 L1.5 4 L5 7.2" stroke="#606060" stroke-width="1.6" fill="none"/></svg><svg class="r" style="left:538px;top:939px" width="6" height="8" viewBox="0 0 6 8"><path d="M1 0.8 L4.5 4 L1 7.2" stroke="#606060" stroke-width="1.6" fill="none"/></svg><div class="r" style="left:0px;top:955px;width:566px;height:1px;background:repeating-linear-gradient(to right,#c8c8c8 0 1px,transparent 1px 3px)"></div><div class="r" style="left:0px;top:991px;width:566px;height:1px;background:repeating-linear-gradient(to right,#c8c8c8 0 1px,transparent 1px 3px)"></div><div class="r" style="left:8px;top:971.5px;width:12px;height:3.5px;background:#a0c05a;"></div><div class="r" style="left:12.3px;top:967px;width:3.5px;height:12px;background:#a0c05a;"></div><div class="r" style="left:36px;top:971px;width:12px;height:4px;background:#f0607a;"></div><div class="r" style="left:63px;top:965px;width:1px;height:14px;background:repeating-linear-gradient(to bottom,#b0b0b0 0 1px,transparent 1px 3px)"></div><svg class="r" style="left:80px;top:968px" width="12" height="9" viewBox="0 0 12 9"><path d="M1.3 7.5 L6 2.5 L10.7 7.5" stroke="#4a80c0" stroke-width="2.6" fill="none"/></svg><div class="t" style="left:96.2px;top:967.91px;font-size:10.5px;color:#000;font-weight:normal;">Details</div><div class="r" style="left:464px;top:961px;width:24px;height:23px;background:#cce4f7;box-sizing:border-box;border:1px solid #99c9ef"></div><div class="t" style="left:470px;top:967.11px;font-size:17px;color:#1a1a1a;font-weight:bold;">Σ</div><div class="r" style="left:499px;top:965px;width:1px;height:14px;background:repeating-linear-gradient(to bottom,#b0b0b0 0 1px,transparent 1px 3px)"></div><svg class="r" style="left:513px;top:964px" width="15" height="16" viewBox="0 0 15 16"><path d="M3 3 V13 H7 M3 8 H7" stroke="#262626" stroke-width="1.4" fill="none"/><rect x="1" y="1" width="4" height="3" fill="none" stroke="#262626" stroke-width="1.2"/><rect x="7" y="6.5" width="5" height="3" fill="#fff" stroke="#262626" stroke-width="1.2"/><rect x="7" y="11.5" width="5" height="3" fill="#fff" stroke="#262626" stroke-width="1.2"/><circle cx="11" cy="4.5" r="3.9" fill="#262626"/><path d="M11 2 V7 M8.5 4.5 H13.5" stroke="#90c050" stroke-width="1.5"/></svg><svg class="r" style="left:541px;top:964px" width="15" height="16" viewBox="0 0 15 16"><path d="M3 3 V13 H7 M3 8 H7" stroke="#b0b0b0" stroke-width="1.4" fill="none"/><rect x="1" y="1" width="4" height="3" fill="none" stroke="#262626" stroke-width="1.2"/><rect x="7" y="6.5" width="5" height="3" fill="#fff" stroke="#b0b0b0" stroke-width="1.2"/><rect x="7" y="11.5" width="5" height="3" fill="#fff" stroke="#b0b0b0" stroke-width="1.2"/><circle cx="11" cy="4.5" r="3.9" fill="#262626"/><path d="M8.5 4.5 H13.5" stroke="#f07080" stroke-width="1.6"/></svg><div class="r" style="left:570px;top:116px;width:712px;height:875px;background:#ffffff;"></div><svg class="r" style="left:570px;top:116px;overflow:hidden" width="712" height="875" viewBox="0 0 712 875"><defs><clipPath id="tc"><polygon points="0.0,0.0 4.5,0.0 144.4,114.0 4.0,114.0 0.0,89.0"/></clipPath></defs><polygon points="0.0,0.0 4.5,0.0 144.4,114.0 4.0,114.0 0.0,89.0" fill="#179b9c"/><g clip-path="url(#tc)"><line x1="0" y1="11" x2="32" y2="7" stroke="#7d9a90" stroke-width="0.9"/><line x1="0" y1="24" x2="40" y2="20" stroke="#7d9a90" stroke-width="0.9"/><line x1="0" y1="37" x2="55" y2="32" stroke="#7d9a90" stroke-width="0.9"/><line x1="0" y1="49.5" x2="70" y2="44" stroke="#7d9a90" stroke-width="0.9"/><line x1="0" y1="62.5" x2="73" y2="54.900000000000006" stroke="#7d9a90" stroke-width="0.9"/><line x1="0" y1="82" x2="92.70000000000005" y2="71.4" stroke="#7d9a90" stroke-width="0.9"/><line x1="72" y1="96.5" x2="130" y2="90" stroke="#7d9a90" stroke-width="0.9"/><line x1="7.2000000000000455" y1="104.80000000000001" x2="72" y2="96.4" stroke="#1a4a4a" stroke-width="1"/><line x1="32.60000000000002" y1="66.19999999999999" x2="68.29999999999995" y2="113.69999999999999" stroke="#10a040" stroke-width="1" stroke-dasharray="3 2"/><line x1="0" y1="8" x2="30" y2="50" stroke="#10a040" stroke-width="0.9" stroke-dasharray="3 4"/><line x1="0" y1="90" x2="10" y2="114" stroke="#10a040" stroke-width="1" stroke-dasharray="2 2"/></g><line x1="0" y1="11" x2="30" y2="7.700000000000003" stroke="#a0a0a0" stroke-width="1.2"/><polygon points="27.9,55.9 37.3,55.0 51.4,68.6 40.1,69.5" fill="#a8a8a8"/><rect x="71.79999999999995" y="48" width="4" height="4" fill="#8a8a8a"/><path d="M4.5 0.0 L30.6 16.5 L44.4 14.9 L56.0 10.5 L60.7 6.8 L54.0 2.5 L46.0 0.0" stroke="#111" stroke-width="1.1" fill="none"/><path d="M34.3 18.4 L55.0 14.0 L74.8 9.0" stroke="#111" stroke-width="1.1" fill="none"/><path d="M31.8 0.0 L41.9 5.8" stroke="#111" stroke-width="1.1" fill="none"/><path d="M21.0 0.0 L89.0 54.0 L158.5 116.0" stroke="#111" stroke-width="1.1" fill="none"/><path d="M19.3 0.0 L91.8 54.0 L160.4 116.0" stroke="#e8206a" stroke-width="1.3" fill="none"/><path d="M41.2 23.5 L50.0 22.0" stroke="#111" stroke-width="2" fill="none"/><path d="M50.0 31.8 L100.1 25.0" stroke="#111" stroke-width="1.1" fill="none"/><path d="M52.5 34.0 L85.7 30.6 L109.5 29.3 L135.0 36.4 L257.5 116.0" stroke="#111" stroke-width="1.1" fill="none"/><path d="M144.4 33.2 L158.5 39.6 L194.2 61.8 L280.5 116.0" stroke="#111" stroke-width="1.1" fill="none"/><polygon points="198.0,769.0 712.0,769.0 712.0,875.0 225.0,875.0" fill="#179b9c"/><polygon points="198.0,769.0 203.0,769.0 230.0,875.0 225.0,875.0" fill="#45b5b5"/><path d="M202.0 769.0 L228.0 875.0" stroke="#8a4a3a" stroke-width="1" fill="none"/><path d="M205.0 769.0 L231.0 875.0" stroke="#909090" stroke-width="1" fill="none"/><polygon points="522.0,769.0 536.4,769.0 555.2,795.3 567.7,794.0 567.7,769.0 586.5,769.0 611.6,795.3 615.3,793.4 685.5,875.0 517.6,875.0 516.3,856.7 505.0,817.2 517.6,834.2 515.7,821.0 533.9,821.0" fill="#44c2a8"/><polygon points="559.0,797.2 567.7,794.0 567.7,769.0 597.8,832.9 606.6,814.7 615.3,846.7 634.1,875.0 599.0,875.0 584.0,845.4" fill="#00cc80"/><polygon points="586.5,769.0 593.0,775.0 615.3,816.0 611.6,795.3" fill="#00cc80"/><path d="M603.4 769.0 L678.0 875.0" stroke="#10a020" stroke-width="1.2" fill="none"/><path d="M607.8 769.0 L684.3 875.0" stroke="#10a020" stroke-width="1.2" fill="none"/><path d="M605.6 769.0 L681.0 875.0" stroke="#c08070" stroke-width="0.8" fill="none"/><path d="M0.7999999999999545 769 Q28 829 71.10000000000002 875" stroke="#20e0f0" stroke-width="1.5" fill="none"/><line x1="0.8" y1="769.0" x2="11.8" y2="762.0" stroke="#111" stroke-width="1.3"/><line x1="5.1" y1="778.1" x2="16.1" y2="771.1" stroke="#111" stroke-width="1.3"/><line x1="9.5" y1="787.1" x2="20.5" y2="780.1" stroke="#111" stroke-width="1.3"/><line x1="14.2" y1="795.9" x2="25.2" y2="788.9" stroke="#111" stroke-width="1.3"/><line x1="19.0" y1="804.6" x2="30.0" y2="797.6" stroke="#111" stroke-width="1.3"/><line x1="24.1" y1="813.1" x2="35.1" y2="806.1" stroke="#111" stroke-width="1.3"/><line x1="29.3" y1="821.4" x2="40.3" y2="814.4" stroke="#111" stroke-width="1.3"/><line x1="34.7" y1="829.6" x2="45.7" y2="822.6" stroke="#111" stroke-width="1.3"/><line x1="40.3" y1="837.5" x2="51.3" y2="830.5" stroke="#111" stroke-width="1.3"/><line x1="46.1" y1="845.4" x2="57.1" y2="838.4" stroke="#111" stroke-width="1.3"/><line x1="52.1" y1="853.0" x2="63.1" y2="846.0" stroke="#111" stroke-width="1.3"/><line x1="58.2" y1="860.5" x2="69.2" y2="853.5" stroke="#111" stroke-width="1.3"/><line x1="64.6" y1="867.8" x2="75.6" y2="860.8" stroke="#111" stroke-width="1.3"/><line x1="71.1" y1="875.0" x2="82.1" y2="868.0" stroke="#111" stroke-width="1.3"/><path d="M124.0 769.0 L145.7 875.0" stroke="#111" stroke-width="1.1" fill="none"/><path d="M178.0 769.0 L203.7 875.0" stroke="#e8206a" stroke-width="1.3" fill="none"/></svg><div class="r" style="left:1282px;top:116px;width:4px;height:875px;background:#f0f0f0;"></div><div class="r" style="left:1286px;top:116px;width:629px;height:17px;background:#e3e3e3;"></div><div class="t" style="left:1294.8px;top:118.74px;font-size:12.0px;color:#000;font-weight:normal;">Objekte, verknüpfte Dokumente</div><div class="r" style="left:1286px;top:133px;width:629px;height:47px;background:#ffffff;"></div><div class="r" style="left:1286px;top:180px;width:629px;height:1px;background:#d0d0d0;"></div><div class="r" style="left:1286px;top:181px;width:629px;height:810px;background:#f0f0f0;"></div><svg class="r" style="left:1882.5px;top:121px" width="7" height="7" viewBox="0 0 7 7"><path d="M2.5 0.5 H6.5 V4.5 H5.5" stroke="#262626" stroke-width="1.2" fill="none"/><path d="M2 1 H6.3" stroke="#262626" stroke-width="2"/><rect x="0.6" y="2.8" width="4" height="3.6" fill="none" stroke="#262626" stroke-width="1.2"/><path d="M0.6 3.2 H4.6" stroke="#262626" stroke-width="1.6"/></svg><svg class="r" style="left:1903px;top:122px" width="7" height="7" viewBox="0 0 7 7"><path d="M0.6 0.6 L6.4 6.4 M6.4 0.6 L0.6 6.4" stroke="#333" stroke-width="1.5"/></svg><svg class="r" style="left:1296px;top:141px" width="30" height="30" viewBox="0 0 30 30"><circle cx="14.5" cy="14.5" r="13.2" fill="#fff" stroke="#262626" stroke-width="2.2"/><circle cx="14.5" cy="8" r="2.6" fill="#90c050"/><path d="M12.5 12 H16 V21.5 H17.5 V23.5 H11.5 V21.5 H13 V14 H12.5 Z" fill="#90c050"/></svg><div class="t" style="left:1332.5px;top:151.04px;font-size:12px;color:#000;font-weight:bold;letter-spacing:-0.007px;">Datenblatt</div><svg class="r" style="left:1644px;top:141px" width="25" height="29" viewBox="0 0 25 29"><path d="M5 12 V8 A6.5 6.5 0 0 1 18 8 V9" fill="none" stroke="#262626" stroke-width="2.8"/><rect x="1" y="13" width="23" height="15.5" rx="1.5" fill="#90c050"/><circle cx="12.5" cy="19.5" r="2" fill="#fff"/><rect x="11.5" y="20" width="2" height="5" fill="#fff"/></svg><div class="r" style="left:1684px;top:144px;width:1px;height:22px;background:repeating-linear-gradient(to bottom,#b0b0b0 0 1px,transparent 1px 3px)"></div><svg class="r" style="left:1698px;top:142px" width="30" height="30" viewBox="0 0 30 30"><polygon points="13,1 24,6 13,11 2,6" fill="#ffd000" stroke="#262626" stroke-width="1.6" stroke-linejoin="round"/><polygon points="2,6 13,11 13,26 2,21" fill="#ffd000" stroke="#262626" stroke-width="1.6" stroke-linejoin="round"/><polygon points="24,6 13,11 13,26 24,21" fill="#262626" stroke="#262626" stroke-width="1.6"/><circle cx="22" cy="22" r="6.5" fill="#fff"/><path d="M17.5 21 A4.5 4.5 0 0 1 25.5 18.5 M26.5 23 A4.5 4.5 0 0 1 18.5 25.5" fill="none" stroke="#262626" stroke-width="1.8"/><path d="M24 16.5 L26.5 19 L23.5 20 Z M20 27.5 L17.5 25 L20.5 24 Z" fill="#262626"/></svg><div class="t" style="left:1729.3px;top:151.39px;font-size:11px;color:#111;font-weight:normal;letter-spacing:-0.056px;">Objektdaten</div><svg class="r" style="left:1807px;top:141px" width="31" height="31" viewBox="0 0 31 31"><path d="M9 4 V1 H21 L26 6 V22" fill="none" stroke="#90c050" stroke-width="1.8"/><path d="M1.5 6 H14 L20 12 V29 H1.5 Z" fill="#fff" stroke="#262626" stroke-width="2"/><path d="M14 6 V12 H20" fill="none" stroke="#262626" stroke-width="1.8"/><circle cx="24" cy="24" r="6.5" fill="#fff"/><path d="M19.5 23 A4.5 4.5 0 0 1 27.5 20.5 M28.5 25 A4.5 4.5 0 0 1 20.5 27.5" fill="none" stroke="#262626" stroke-width="1.8"/><path d="M26 18.5 L28.5 21 L25.5 22 Z M22 29.5 L19.5 27 L22.5 26 Z" fill="#262626"/></svg><div class="t" style="left:1840px;top:151.39px;font-size:11px;color:#111;font-weight:normal;letter-spacing:-0.061px;">Dokumente</div><div class="r" style="left:1292.4px;top:187px;width:298.3px;height:48.5px;background:#aaaaaa;"></div><div class="r" style="left:1593.3px;top:187px;width:316.7px;height:48.5px;background:#aaaaaa;"></div><div class="r" style="left:1292.4px;top:237.5px;width:298.3px;height:18.2px;background:#c8c8c8;"></div><div class="r" style="left:1593.3px;top:237.5px;width:316.7px;height:18.2px;background:#c8c8c8;"></div><svg class="r" style="left:1294px;top:188.5px" width="100" height="45.5" viewBox="0 0 100 45.5"><rect width="100" height="45.5" fill="#141414"/><rect x="0" y="0" width="21" height="45.5" fill="#2c2c2c"/><rect x="80" y="0" width="20" height="45.5" fill="#2c2c2c"/><rect x="0" y="0" width="100" height="2.5" fill="#1a1a1a"/><rect x="0" y="10.8" width="21" height="1.8" fill="#3d5a80"/><polygon points="30,39 34,42 44,37 62,24 74,16 71,12 66,10.5 56,17 40,28 32,33" fill="#b8c0cc"/><polygon points="34,37 44,31 60,21 68,14 70,16 58,25 44,34 36,39" fill="#d8dce8"/><path d="M36 37 L66 15" stroke="#7060d8" stroke-width="0.8" opacity="0.7"/><rect x="2" y="2.5" width="1.5" height="1.5" fill="#fff"/><rect x="3" y="9" width="5" height="1" fill="#ccc"/><rect x="3" y="14" width="1.5" height="1.5" fill="#2a90e0"/><rect x="3" y="20" width="2" height="1.2" fill="#2a90e0"/><rect x="4" y="25" width="3" height="1.2" fill="#ddd"/><rect x="3" y="29" width="1.5" height="1.2" fill="#2a90e0"/><rect x="82" y="8" width="2" height="2" fill="#fff"/><rect x="83" y="13" width="4" height="1" fill="#ccc"/><rect x="89" y="13" width="3" height="1.2" fill="#eee"/><rect x="91" y="25" width="3" height="1.3" fill="#eee"/><rect x="82" y="31" width="14" height="1.5" fill="#444"/><rect x="96" y="31" width="1.5" height="1.5" fill="#2a90e0"/><rect x="91" y="37" width="1.5" height="1" fill="#d04060"/><rect x="93" y="37" width="1.5" height="1" fill="#d04060"/><rect x="92" y="42" width="3" height="1" fill="#3060c0"/><rect x="25" y="42" width="2" height="1.5" fill="#3d5a80"/><rect x="32" y="42" width="1" height="1.5" fill="#fff"/><rect x="78" y="4" width="1" height="16" fill="#3a3a3a"/></svg><div class="t" style="left:1595px;top:192.11px;font-size:10.5px;color:#0000ee;font-weight:normal;letter-spacing:0.1px"><u>Gehweg bei BW511.PNG</u></div><div class="t" style="left:1595px;top:242.94px;font-size:10.7px;color:#0000ee;font-weight:normal;"><u>SR_Zugriff_PIX4D.pdf</u></div><div class="r" style="left:1593px;top:239px;width:108px;height:16px;box-sizing:border-box;border:1px dotted #505050"></div><div class="r" style="left:1286px;top:970px;width:629px;height:1px;background:#a0a0a0;"></div><div class="r" style="left:1288px;top:971px;width:67px;height:18px;background:#e8e8e8;box-sizing:border-box;border:1px solid #c8c8c8;border-top:none"></div><div class="r" style="left:1355px;top:970px;width:183.6px;height:21px;background:#ffffff;"></div><div class="r" style="left:1538.6px;top:971px;width:92.2px;height:18px;background:#f0f0f0;box-sizing:border-box;border-bottom:1px solid #d0d0d0;border-right:1px solid #d0d0d0"></div><div class="t" style="left:1298px;top:975.29px;font-size:11px;color:#111;font-weight:normal;letter-spacing:-0.062px;">Vorgänge</div><div class="t" style="left:1369.5px;top:976.19px;font-size:11px;color:#111;font-weight:normal;letter-spacing:0.007px;">Objekte, verknüpfte Dokumente</div><div class="t" style="left:1549px;top:975.29px;font-size:11px;color:#111;font-weight:normal;letter-spacing:0.059px;">Projektstruktur</div><div class="r" style="left:0px;top:991px;width:1915px;height:26px;background:#ffffff;"></div><div class="r" style="left:0px;top:991px;width:1915px;height:1px;background:repeating-linear-gradient(to right,#c8c8c8 0 1px,transparent 1px 3px)"></div><svg class="r" style="left:1896px;top:997px" width="15" height="15" viewBox="0 0 15 15"><path d="M7.5 1 A6.5 5.5 0 1 1 4 11.5 L1.5 14 L2.5 10 A6.5 5.5 0 0 1 7.5 1 Z" fill="#fff" stroke="#262626" stroke-width="1.3"/><path d="M4.5 5 H10.5 M4.5 7 H10.5 M4.5 9 H9" stroke="#90c050" stroke-width="1"/></svg><div class="r" style="left:1054px;top:6px;width:1px;height:14px;background:repeating-linear-gradient(to bottom,#909090 0 1px,transparent 1px 3px)"></div><div class="r" style="left:1126px;top:6px;width:1px;height:14px;background:repeating-linear-gradient(to bottom,#909090 0 1px,transparent 1px 3px)"></div><svg class="r" style="left:1070px;top:8px" width="15" height="12" viewBox="0 0 15 12"><rect x="0.7" y="0.7" width="13.6" height="10.6" fill="#fff" stroke="#262626" stroke-width="1.4"/><rect x="0.7" y="0.7" width="13.6" height="2.5" fill="#262626"/><path d="M4.5 3 V11" stroke="#262626" stroke-width="1.2"/><path d="M2.2 5 V10" stroke="#90c050" stroke-width="1.5" stroke-dasharray="1.2 0.8"/></svg><svg class="r" style="left:1096px;top:7px" width="15" height="14" viewBox="0 0 15 14"><rect x="0.7" y="0.7" width="13.6" height="9.6" fill="#fff" stroke="#262626" stroke-width="1.4"/><path d="M5 12.5 H10" stroke="#262626" stroke-width="1.6"/><path d="M7.5 2.5 L9 4 H6 Z M7.5 8.5 L9 7 H6 Z M3 5.5 L4.5 4.2 V6.8 Z M12 5.5 L10.5 4.2 V6.8 Z" fill="#90c050"/></svg><svg class="r" style="left:1138px;top:8px" width="16" height="12" viewBox="0 0 16 12"><circle cx="5.5" cy="6" r="5" fill="none" stroke="#262626" stroke-width="1.4"/><circle cx="10.5" cy="6" r="5" fill="none" stroke="#262626" stroke-width="1.4"/><path d="M8 2 Q6.5 6 8 10 Q9.5 6 8 2" fill="#90c050"/></svg><div class="t" style="left:1156px;top:9.69px;font-size:11px;color:#111;font-weight:normal;">0</div><div class="r" style="left:1172px;top:2px;width:37px;height:24px;background:#4d4d4d;"></div><div class="t" style="left:1188px;top:10.81px;font-size:9.2px;color:#fff;font-weight:normal;">1</div><div class="r" style="left:1209px;top:2px;width:38px;height:24px;background:#ffff00;"></div><div class="t" style="left:1225.5px;top:10.81px;font-size:9.2px;color:#7a7a20;font-weight:normal;">1</div><div class="r" style="left:1247px;top:2px;width:37.7px;height:24px;background:#f2f2f2;box-sizing:border-box;border:1px solid #d8dde4"></div><div class="t" style="left:1261px;top:11.40px;font-size:8.5px;color:#8090a0;font-weight:normal;">...</div><svg class="r" style="left:1290px;top:8px" width="16" height="12" viewBox="0 0 16 12"><path d="M0.5 6 Q8 -2 15.5 6 Q8 14 0.5 6 Z" fill="#fff" stroke="#262626" stroke-width="1.3"/><circle cx="8" cy="6" r="3.5" fill="#90c050"/><circle cx="8" cy="6" r="1.5" fill="#262626"/></svg><svg class="r" style="left:1318px;top:7px" width="12" height="14" viewBox="0 0 12 14"><rect x="0.7" y="0.7" width="10.6" height="12.6" fill="#fff" stroke="#262626" stroke-width="1.4"/><path d="M0.7 4 H11.3 M0.7 7 H11.3 M0.7 10 H11.3" stroke="#262626" stroke-width="1.2"/><path d="M5 4 V7 M3 7 V10 M7 10 V13" stroke="#262626" stroke-width="1.2"/><rect x="1.5" y="1.5" width="3" height="2" fill="#262626"/></svg><svg class="r" style="left:1342.5px;top:8px" width="15" height="13" viewBox="0 0 15 13"><path d="M1 7 L7.5 1 L14 7" fill="none" stroke="#90c050" stroke-width="1.8"/><path d="M3 7 L7.5 3 L12 7 V12.5 H9 V9.5 H6 V12.5 H3 Z" fill="#262626"/></svg><svg class="r" style="left:1823px;top:6px" width="16" height="14" viewBox="0 0 16 14"><path d="M8 1 L15 13.2 H1 Z" fill="#fff" stroke="#262626" stroke-width="1.3" stroke-linejoin="round"/><path d="M8 5 V9.5" stroke="#90c050" stroke-width="1.6"/><circle cx="8" cy="11.2" r="0.9" fill="#90c050"/></svg><div class="t" style="left:1841px;top:10.19px;font-size:11px;color:#111;font-weight:normal;">16</div><svg class="r" style="left:1869.5px;top:8px" width="11" height="13" viewBox="0 0 11 13"><rect x="0.5" y="0.5" width="10" height="12" rx="1" fill="#262626"/><rect x="0.5" y="4" width="3" height="1.2" fill="#fff"/><rect x="0.5" y="8" width="3" height="1.2" fill="#fff"/></svg><svg class="r" style="left:1893px;top:6px" width="15" height="15" viewBox="0 0 15 15"><circle cx="7.5" cy="7.5" r="6.6" fill="#fff" stroke="#262626" stroke-width="1.3"/><circle cx="7.5" cy="4.2" r="1.1" fill="#90c050"/><rect x="6.6" y="6.2" width="1.8" height="5" fill="#90c050"/></svg><div class="r" style="left:553px;top:230px;width:750px;height:661px;background:#202020;box-shadow:2px 3px 18px 2px rgba(0,0,0,0.3)"></div><div class="r" style="left:553px;top:230px;width:49px;height:48px;background:#2c2c2c;"></div><div class="r" style="left:553px;top:342px;width:750px;height:1px;background:#2a2a2a;"></div><div class="r" style="left:553px;top:343px;width:22px;height:516px;background:#2d2d2d;"></div><div class="r" style="left:575px;top:343px;width:712px;height:516px;background:#141414;"></div><div class="r" style="left:1287px;top:343px;width:16px;height:516px;background:#2d2d2d;"></div><svg class="r" style="left:575px;top:343px;overflow:hidden" width="712" height="516" viewBox="575 343 712 516"><defs><filter id="spk" x="0" y="0" width="100%" height="100%"><feTurbulence type="fractalNoise" baseFrequency="0.9" numOctaves="2" seed="3"/><feColorMatrix values="0 0 0 0 0.5  0 0 0 0 0.5  0 0 0 0 0.5  0 0 0 1.6 -0.75"/><feComposite in2="SourceGraphic" operator="in"/></filter><linearGradient id="rg" x1="0" y1="1" x2="1" y2="0"><stop offset="0" stop-color="#8a8882"/><stop offset="0.5" stop-color="#9a978e"/><stop offset="1" stop-color="#aaa497"/></linearGradient><linearGradient id="lg" x1="0" y1="1" x2="1" y2="0"><stop offset="0" stop-color="#a4abb2"/><stop offset="0.6" stop-color="#9ea9b6"/><stop offset="1" stop-color="#aab6c4"/></linearGradient></defs><polygon points="682.4,743.0 682.4,752.3 688.0,768.0 695.0,775.0 735.6,780.6 776.3,782.8 814.8,772.7 851.0,759.0 857.8,741.0 882.7,722.9 900.0,716.0 914.7,710.0 950.0,690.0 987.5,663.0 1011.0,640.0 1025.9,625.5 1039.7,620.6 1058.3,604.0 1073.0,597.0 1078.0,596.0 1086.9,585.2 1098.7,576.4 1112.4,568.5 1128.2,562.6 1140.0,556.2 1156.7,552.0 1164.5,534.4 1186.2,518.7 1204.8,501.0 1194.0,487.2 1180.6,477.4 1182.0,468.0 1160.0,455.0 1134.0,449.8 1129.0,448.8 1109.5,464.0 1082.0,482.0 1044.6,511.0 960.0,560.0 896.2,597.0 857.8,621.0 833.0,634.0 787.6,660.0 771.8,663.0 728.8,664.0 710.7,680.0 690.4,718.4" fill="url(#lg)"/><polygon points="690.4,718.4 710.7,680.0 728.8,664.0 771.8,663.0 787.6,660.0 833.0,634.0 857.8,621.0 896.2,597.0 960.0,560.0 1044.6,511.0 1082.0,482.0 1109.5,464.0 1129.0,448.8 1134.0,449.8 1131.1,458.7 734.5,719.5 700.0,745.0 686.0,748.0" fill="#6c7176"/><polygon points="690.4,718.4 710.7,680.0 728.8,664.0 771.8,663.0 787.6,660.0 833.0,634.0 857.8,621.0 896.2,597.0 960.0,560.0 1044.6,511.0 1082.0,482.0 1109.5,464.0 1129.0,448.8 1134.0,449.8 1131.1,458.7 734.5,719.5 700.0,745.0 686.0,748.0" fill="#fff" filter="url(#spk)" opacity="0.25"/><polygon points="686.0,740.0 690.4,718.4 710.7,680.0 728.8,664.0 771.8,663.0 787.6,660.0 833.0,634.0 857.8,621.0 896.2,597.0 960.0,560.0 1044.6,511.0 1082.0,482.0 1109.5,464.0 1129.0,448.8 1134.0,449.8 1130.0,455.0 1109.0,469.0 1082.0,487.0 1044.6,516.0 960.0,565.0 896.2,602.0 857.8,626.0 833.0,639.0 790.0,663.0 690.4,727.4" fill="#4a4f30"/><polygon points="692.0,718.0 712.0,681.0 729.0,665.0 760.0,664.0 745.0,690.0 720.0,715.0" fill="#56633a"/><path d="M690.4 729 L790 665" stroke="#7a6450" stroke-width="3" fill="none"/><path d="M700 745 L734.5 719.5 L1131.1 458.7" stroke="#8a92a8" stroke-width="2" fill="none"/><polygon points="686.0,750.0 700.0,745.0 734.5,719.5 778.6,764.8 776.3,782.8 735.6,780.6 695.0,775.0 688.0,768.0" fill="#8e9398"/><polygon points="686.0,750.0 700.0,745.0 734.5,719.5 778.6,764.8 776.3,782.8 735.6,780.6 695.0,775.0 688.0,768.0" fill="#fff" filter="url(#spk)" opacity="0.3"/><polygon points="686.0,740.0 690.4,718.4 710.7,680.0 728.8,664.0 771.8,663.0 787.6,660.0 833.0,634.0 857.8,621.0 896.2,597.0 960.0,560.0 1044.6,511.0 1082.0,482.0 1109.5,464.0 1129.0,448.8 1134.0,449.8 1130.0,455.0 1109.0,469.0 1082.0,487.0 1044.6,516.0 960.0,565.0 896.2,602.0 857.8,626.0 833.0,639.0 790.0,663.0 690.4,727.4" fill="#fff" filter="url(#spk)" opacity="0.35"/><polygon points="734.5,719.5 778.6,764.8 1180.6,477.4 1131.1,458.7" fill="url(#rg)"/><polygon points="734.5,719.5 778.6,764.8 1180.6,477.4 1131.1,458.7" fill="#fff" filter="url(#spk)" opacity="0.5"/><path d="M741 729 L1129 469" stroke="#6a5ae8" stroke-width="9" fill="none" opacity="0.5"/><path d="M745 726 L900 622 M960 583 L1050 522" stroke="#6a5ae8" stroke-width="4" fill="none" opacity="0.9"/><path d="M736 722 L776 763" stroke="#7a58d8" stroke-width="4" fill="none"/><path d="M1133 461 L1178 478" stroke="#7a58d8" stroke-width="5" fill="none"/><path d="M778.6 764.8 L1180.6 477.4" stroke="#8c90e0" stroke-width="1.6" fill="none"/><rect x="864.8" y="639.4" width="2.6" height="1.5" fill="#6a5ae8" opacity="0.8"/><rect x="772.9" y="713.4" width="1.9" height="1.5" fill="#6a5ae8" opacity="0.8"/><rect x="766.6" y="716.2" width="1.1" height="1.5" fill="#6a5ae8" opacity="0.8"/><rect x="907.2" y="610.2" width="1.2" height="1.5" fill="#6a5ae8" opacity="0.8"/><rect x="919.4" y="634.6" width="1.3" height="1.5" fill="#6a5ae8" opacity="0.8"/><rect x="834.2" y="677.6" width="3.4" height="1.5" fill="#6a5ae8" opacity="0.8"/><rect x="966.7" y="577.8" width="3.4" height="1.5" fill="#6a5ae8" opacity="0.8"/><rect x="773.3" y="734.7" width="1.7" height="1.5" fill="#6a5ae8" opacity="0.8"/><rect x="794.6" y="685.9" width="1.8" height="1.5" fill="#6a5ae8" opacity="0.8"/><rect x="1057.0" y="511.5" width="2.5" height="1.5" fill="#6a5ae8" opacity="0.8"/><rect x="990.4" y="561.1" width="2.4" height="1.5" fill="#6a5ae8" opacity="0.8"/><rect x="762.6" y="706.8" width="1.5" height="1.5" fill="#6a5ae8" opacity="0.8"/><rect x="1007.6" y="551.7" width="1.8" height="1.5" fill="#6a5ae8" opacity="0.8"/><rect x="971.1" y="577.1" width="1.7" height="1.5" fill="#6a5ae8" opacity="0.8"/><rect x="1059.1" y="531.9" width="1.6" height="1.5" fill="#6a5ae8" opacity="0.8"/><rect x="968.4" y="582.3" width="3.2" height="1.5" fill="#6a5ae8" opacity="0.8"/><rect x="1024.4" y="535.7" width="3.5" height="1.5" fill="#6a5ae8" opacity="0.8"/><rect x="788.1" y="697.9" width="2.9" height="1.5" fill="#6a5ae8" opacity="0.8"/><rect x="802.8" y="691.2" width="1.1" height="1.5" fill="#6a5ae8" opacity="0.8"/><rect x="1012.2" y="567.9" width="2.4" height="1.5" fill="#6a5ae8" opacity="0.8"/><rect x="1081.7" y="498.1" width="2.7" height="1.5" fill="#6a5ae8" opacity="0.8"/><rect x="977.6" y="579.1" width="2.1" height="1.5" fill="#6a5ae8" opacity="0.8"/><rect x="1086.3" y="533.1" width="2.2" height="1.5" fill="#6a5ae8" opacity="0.8"/><rect x="997.1" y="550.1" width="2.8" height="1.5" fill="#6a5ae8" opacity="0.8"/><rect x="1013.3" y="586.4" width="3.1" height="1.5" fill="#6a5ae8" opacity="0.8"/><rect x="852.4" y="653.7" width="2.7" height="1.5" fill="#6a5ae8" opacity="0.8"/><rect x="751.7" y="724.0" width="1.4" height="1.5" fill="#6a5ae8" opacity="0.8"/><rect x="783.7" y="692.6" width="2.9" height="1.5" fill="#6a5ae8" opacity="0.8"/><rect x="789.9" y="691.3" width="2.0" height="1.5" fill="#6a5ae8" opacity="0.8"/><rect x="1078.0" y="496.2" width="2.1" height="1.5" fill="#6a5ae8" opacity="0.8"/><rect x="970.4" y="605.2" width="3.0" height="1.5" fill="#6a5ae8" opacity="0.8"/><rect x="1076.8" y="500.4" width="2.0" height="1.5" fill="#6a5ae8" opacity="0.8"/><rect x="896.1" y="654.9" width="3.4" height="1.5" fill="#6a5ae8" opacity="0.8"/><rect x="797.6" y="684.7" width="1.6" height="1.5" fill="#6a5ae8" opacity="0.8"/><rect x="834.5" y="669.8" width="2.5" height="1.5" fill="#6a5ae8" opacity="0.8"/><rect x="840.5" y="654.6" width="2.0" height="1.5" fill="#6a5ae8" opacity="0.8"/><rect x="889.5" y="637.2" width="3.4" height="1.5" fill="#6a5ae8" opacity="0.8"/><rect x="1013.5" y="551.7" width="2.5" height="1.5" fill="#6a5ae8" opacity="0.8"/><rect x="1001.8" y="546.9" width="3.2" height="1.5" fill="#6a5ae8" opacity="0.8"/><rect x="1059.9" y="544.6" width="3.0" height="1.5" fill="#6a5ae8" opacity="0.8"/><rect x="894.7" y="625.9" width="1.3" height="1.5" fill="#6a5ae8" opacity="0.8"/><rect x="985.5" y="557.9" width="1.2" height="1.5" fill="#6a5ae8" opacity="0.8"/><rect x="820.0" y="669.5" width="1.9" height="1.5" fill="#6a5ae8" opacity="0.8"/><rect x="758.5" y="709.3" width="1.4" height="1.5" fill="#6a5ae8" opacity="0.8"/><rect x="780.6" y="700.9" width="1.1" height="1.5" fill="#6a5ae8" opacity="0.8"/><rect x="1087.7" y="507.5" width="1.4" height="1.5" fill="#6a5ae8" opacity="0.8"/><rect x="839.2" y="661.2" width="1.9" height="1.5" fill="#6a5ae8" opacity="0.8"/><rect x="802.6" y="714.4" width="3.5" height="1.5" fill="#6a5ae8" opacity="0.8"/><rect x="925.2" y="609.2" width="1.2" height="1.5" fill="#6a5ae8" opacity="0.8"/><rect x="780.6" y="700.2" width="1.7" height="1.5" fill="#6a5ae8" opacity="0.8"/><rect x="1061.9" y="507.9" width="1.1" height="1.5" fill="#6a5ae8" opacity="0.8"/><rect x="1115.4" y="484.3" width="1.4" height="1.5" fill="#6a5ae8" opacity="0.8"/><rect x="949.9" y="581.5" width="2.3" height="1.5" fill="#6a5ae8" opacity="0.8"/><rect x="1136.9" y="492.2" width="2.7" height="1.5" fill="#6a5ae8" opacity="0.8"/><rect x="843.0" y="659.3" width="1.4" height="1.5" fill="#6a5ae8" opacity="0.8"/><rect x="1045.6" y="531.1" width="2.9" height="1.5" fill="#6a5ae8" opacity="0.8"/><rect x="867.7" y="638.7" width="3.0" height="1.5" fill="#6a5ae8" opacity="0.8"/><rect x="1139.0" y="490.0" width="3.0" height="1.5" fill="#6a5ae8" opacity="0.8"/><rect x="1069.8" y="527.6" width="1.6" height="1.5" fill="#6a5ae8" opacity="0.8"/><rect x="942.8" y="592.3" width="1.1" height="1.5" fill="#6a5ae8" opacity="0.8"/><rect x="750.7" y="718.3" width="1.6" height="1.5" fill="#6a5ae8" opacity="0.8"/><rect x="1029.3" y="572.2" width="2.1" height="1.5" fill="#6a5ae8" opacity="0.8"/><rect x="1126.1" y="510.5" width="3.4" height="1.5" fill="#6a5ae8" opacity="0.8"/><rect x="881.3" y="629.6" width="1.6" height="1.5" fill="#6a5ae8" opacity="0.8"/><rect x="815.7" y="673.1" width="2.6" height="1.5" fill="#6a5ae8" opacity="0.8"/><rect x="1105.5" y="511.4" width="2.2" height="1.5" fill="#6a5ae8" opacity="0.8"/><rect x="1007.5" y="573.6" width="1.2" height="1.5" fill="#6a5ae8" opacity="0.8"/><rect x="1014.8" y="577.7" width="3.0" height="1.5" fill="#6a5ae8" opacity="0.8"/><rect x="1035.9" y="535.0" width="1.4" height="1.5" fill="#6a5ae8" opacity="0.8"/><rect x="1048.3" y="521.0" width="3.0" height="1.5" fill="#6a5ae8" opacity="0.8"/><rect x="1120.6" y="475.0" width="2.0" height="1.5" fill="#6a5ae8" opacity="0.8"/><rect x="1119.4" y="493.4" width="1.4" height="1.5" fill="#6a5ae8" opacity="0.8"/><rect x="788.1" y="690.6" width="3.3" height="1.5" fill="#6a5ae8" opacity="0.8"/><rect x="1053.0" y="513.6" width="3.1" height="1.5" fill="#6a5ae8" opacity="0.8"/><rect x="1130.3" y="481.6" width="1.9" height="1.5" fill="#6a5ae8" opacity="0.8"/><rect x="952.4" y="580.6" width="1.0" height="1.5" fill="#6a5ae8" opacity="0.8"/><rect x="1126.4" y="483.8" width="2.3" height="1.5" fill="#6a5ae8" opacity="0.8"/><rect x="1106.5" y="485.9" width="3.2" height="1.5" fill="#6a5ae8" opacity="0.8"/><rect x="1061.2" y="509.2" width="1.6" height="1.5" fill="#6a5ae8" opacity="0.8"/><rect x="853.6" y="648.6" width="2.5" height="1.5" fill="#6a5ae8" opacity="0.8"/><rect x="843.2" y="661.1" width="1.3" height="1.5" fill="#6a5ae8" opacity="0.8"/><rect x="1095.8" y="490.0" width="2.1" height="1.5" fill="#6a5ae8" opacity="0.8"/><rect x="984.5" y="597.5" width="2.1" height="1.5" fill="#6a5ae8" opacity="0.8"/><rect x="1101.7" y="492.1" width="2.3" height="1.5" fill="#6a5ae8" opacity="0.8"/><rect x="942.2" y="586.6" width="2.1" height="1.5" fill="#6a5ae8" opacity="0.8"/><rect x="809.4" y="675.3" width="3.0" height="1.5" fill="#6a5ae8" opacity="0.8"/><rect x="810.4" y="685.4" width="2.8" height="1.5" fill="#6a5ae8" opacity="0.8"/><rect x="957.5" y="581.5" width="2.3" height="1.5" fill="#6a5ae8" opacity="0.8"/><rect x="968.9" y="598.2" width="1.3" height="1.5" fill="#6a5ae8" opacity="0.8"/><rect x="957.9" y="579.0" width="1.7" height="1.5" fill="#6a5ae8" opacity="0.8"/><rect x="1045.2" y="530.2" width="2.4" height="1.5" fill="#6a5ae8" opacity="0.8"/><rect x="1053.7" y="552.0" width="2.1" height="1.5" fill="#6a5ae8" opacity="0.8"/><rect x="982.8" y="571.7" width="2.3" height="1.5" fill="#6a5ae8" opacity="0.8"/><rect x="1012.9" y="549.2" width="2.3" height="1.5" fill="#6a5ae8" opacity="0.8"/><rect x="945.0" y="627.2" width="2.7" height="1.5" fill="#6a5ae8" opacity="0.8"/><rect x="1100.4" y="523.4" width="1.6" height="1.5" fill="#6a5ae8" opacity="0.8"/><rect x="976.9" y="606.1" width="3.1" height="1.5" fill="#6a5ae8" opacity="0.8"/><rect x="791.8" y="687.8" width="2.1" height="1.5" fill="#6a5ae8" opacity="0.8"/><rect x="767.6" y="706.0" width="1.2" height="1.5" fill="#6a5ae8" opacity="0.8"/><rect x="1013.4" y="568.5" width="3.2" height="1.5" fill="#6a5ae8" opacity="0.8"/><rect x="810.1" y="699.4" width="2.7" height="1.5" fill="#6a5ae8" opacity="0.8"/><rect x="811.8" y="711.0" width="3.4" height="1.5" fill="#6a5ae8" opacity="0.8"/><rect x="844.7" y="695.2" width="2.0" height="1.5" fill="#6a5ae8" opacity="0.8"/><rect x="950.8" y="627.8" width="3.1" height="1.5" fill="#6a5ae8" opacity="0.8"/><rect x="805.3" y="687.0" width="2.3" height="1.5" fill="#6a5ae8" opacity="0.8"/><rect x="871.1" y="635.9" width="1.8" height="1.5" fill="#6a5ae8" opacity="0.8"/><rect x="1019.6" y="534.9" width="2.4" height="1.5" fill="#6a5ae8" opacity="0.8"/><rect x="909.8" y="608.3" width="1.8" height="1.5" fill="#6a5ae8" opacity="0.8"/><rect x="987.4" y="569.0" width="1.2" height="1.5" fill="#6a5ae8" opacity="0.8"/><rect x="1136.6" y="486.5" width="3.4" height="1.5" fill="#6a5ae8" opacity="0.8"/><rect x="780.5" y="698.0" width="1.1" height="1.5" fill="#6a5ae8" opacity="0.8"/><rect x="1043.5" y="522.4" width="1.3" height="1.5" fill="#6a5ae8" opacity="0.8"/><rect x="922.0" y="639.9" width="3.0" height="1.5" fill="#6a5ae8" opacity="0.8"/><rect x="839.4" y="656.4" width="3.3" height="1.5" fill="#6a5ae8" opacity="0.8"/><rect x="971.9" y="590.3" width="1.2" height="1.5" fill="#6a5ae8" opacity="0.8"/><rect x="771.4" y="723.4" width="2.1" height="1.5" fill="#6a5ae8" opacity="0.8"/><rect x="786.7" y="732.7" width="2.6" height="1.5" fill="#6a5ae8" opacity="0.8"/><rect x="1050.8" y="514.4" width="3.1" height="1.5" fill="#6a5ae8" opacity="0.8"/><rect x="781.3" y="729.8" width="2.1" height="1.5" fill="#6a5ae8" opacity="0.8"/><rect x="877.4" y="644.6" width="3.3" height="1.5" fill="#6a5ae8" opacity="0.8"/><rect x="842.9" y="653.8" width="2.3" height="1.5" fill="#6a5ae8" opacity="0.8"/><rect x="831.3" y="661.3" width="1.4" height="1.5" fill="#6a5ae8" opacity="0.8"/><rect x="758.6" y="711.2" width="1.8" height="1.5" fill="#6a5ae8" opacity="0.8"/><rect x="870.3" y="662.2" width="1.7" height="1.5" fill="#6a5ae8" opacity="0.8"/><rect x="933.8" y="593.8" width="1.9" height="1.5" fill="#6a5ae8" opacity="0.8"/><rect x="746.5" y="720.3" width="1.0" height="1.5" fill="#6a5ae8" opacity="0.8"/><rect x="1030.9" y="541.9" width="1.5" height="1.5" fill="#6a5ae8" opacity="0.8"/><rect x="943.4" y="627.6" width="1.3" height="1.5" fill="#6a5ae8" opacity="0.8"/><rect x="1061.7" y="515.7" width="2.2" height="1.5" fill="#6a5ae8" opacity="0.8"/><rect x="1067.1" y="510.6" width="2.3" height="1.5" fill="#6a5ae8" opacity="0.8"/><rect x="1028.6" y="575.1" width="1.9" height="1.5" fill="#6a5ae8" opacity="0.8"/><rect x="1074.2" y="522.4" width="2.6" height="1.5" fill="#6a5ae8" opacity="0.8"/><rect x="898.6" y="621.5" width="1.1" height="1.5" fill="#6a5ae8" opacity="0.8"/><rect x="788.7" y="689.3" width="2.9" height="1.5" fill="#6a5ae8" opacity="0.8"/><rect x="838.3" y="657.3" width="1.2" height="1.5" fill="#6a5ae8" opacity="0.8"/><rect x="1083.7" y="528.4" width="2.7" height="1.5" fill="#6a5ae8" opacity="0.8"/><rect x="849.3" y="651.5" width="1.7" height="1.5" fill="#6a5ae8" opacity="0.8"/><rect x="917.8" y="604.1" width="2.1" height="1.5" fill="#6a5ae8" opacity="0.8"/><rect x="862.1" y="684.4" width="3.4" height="1.5" fill="#6a5ae8" opacity="0.8"/><rect x="952.7" y="582.4" width="3.4" height="1.5" fill="#6a5ae8" opacity="0.8"/><polygon points="682.4,743.0 682.4,752.3 688.0,768.0 695.0,775.0 735.6,780.6 776.3,782.8 814.8,772.7 851.0,759.0 857.8,741.0 882.7,722.9 900.0,716.0 914.7,710.0 950.0,690.0 987.5,663.0 1011.0,640.0 1025.9,625.5 1039.7,620.6 1058.3,604.0 1073.0,597.0 1078.0,596.0 1086.9,585.2 1098.7,576.4 1112.4,568.5 1128.2,562.6 1140.0,556.2 1156.7,552.0 1164.5,534.4 1186.2,518.7 1204.8,501.0 1194.0,487.2 1180.6,477.4 1182.0,468.0 1160.0,455.0 1134.0,449.8 1129.0,448.8 1109.5,464.0 1082.0,482.0 1044.6,511.0 960.0,560.0 896.2,597.0 857.8,621.0 833.0,634.0 787.6,660.0 771.8,663.0 728.8,664.0 710.7,680.0 690.4,718.4" fill="#fff" filter="url(#spk)" opacity="0.15"/><g transform="translate(985 640) rotate(-34)"><rect x="-11" y="-6" width="22" height="12" fill="#3a3a3a"/><rect x="-10.0" y="-5" width="1.5" height="10" fill="#d0d0d0"/><rect x="-6.8" y="-5" width="1.5" height="10" fill="#d0d0d0"/><rect x="-3.6" y="-5" width="1.5" height="10" fill="#d0d0d0"/><rect x="-0.4" y="-5" width="1.5" height="10" fill="#d0d0d0"/><rect x="2.8" y="-5" width="1.5" height="10" fill="#d0d0d0"/><rect x="6.0" y="-5" width="1.5" height="10" fill="#d0d0d0"/><rect x="9.2" y="-5" width="1.5" height="10" fill="#d0d0d0"/></g><circle cx="734.5" cy="719.5" r="4.3" fill="#fff"/><circle cx="778.6" cy="764.8" r="4.3" fill="#fff"/><circle cx="1131.1" cy="458.7" r="4.3" fill="#fff"/><circle cx="1180.6" cy="477.4" r="4.3" fill="#fff"/><rect x="740" y="723" width="36.299999999999955" height="10" rx="1.5" fill="#e8e8e8" opacity="0.9"/><text x="758.15" y="731.0" font-family="Liberation Sans" font-size="8.6" fill="#404040" text-anchor="middle">1.278 m</text><rect x="1138" y="453.8" width="36.700000000000045" height="10.800000000000011" rx="1.5" fill="#e8e8e8" opacity="0.9"/><text x="1156.35" y="462.2" font-family="Liberation Sans" font-size="8.6" fill="#404040" text-anchor="middle">1.402 m</text><rect x="981.2" y="525.5" width="94.79999999999995" height="28.5" rx="1.5" fill="#e8e8e8" opacity="0.9"/><text x="1028.6" y="533.2" font-family="Liberation Sans" font-size="8.4" fill="#404040" text-anchor="middle">Cut: 0.00155396 m³</text><text x="1028.6" y="542.7" font-family="Liberation Sans" font-size="8.4" fill="#404040" text-anchor="middle">Fill: -3.01818 m³</text><text x="1028.6" y="552.2" font-family="Liberation Sans" font-size="8.4" fill="#404040" text-anchor="middle">Volume Dif.: -3.01662 m³</text><rect x="751.9" y="738.5" width="7" height="7" rx="1" fill="#f0f0f0"/><path d="M753.4 742 H757.4 M755.4 740 V744" stroke="#333" stroke-width="0.9"/><rect x="1151.5" y="465.0" width="7" height="7" rx="1" fill="#f0f0f0"/><path d="M1153 468.5 H1157 M1155 466.5 V470.5" stroke="#333" stroke-width="0.9"/><rect x="978.1" y="553.5" width="7" height="7" rx="1" fill="#f0f0f0"/><path d="M979.6 557 H983.6 M981.6 555 V559" stroke="#333" stroke-width="0.9"/><rect x="1029.3" y="580.1" width="7" height="7" rx="1" fill="#f0f0f0"/><path d="M1030.8 583.6 H1034.8 M1032.8 581.6 V585.6" stroke="#333" stroke-width="0.9"/><rect x="1086.9" y="582" width="15.7" height="21" fill="#9aa6b4"/><rect x="1106.5" y="589" width="8" height="10" fill="#9aa6b4"/><rect x="1089.3" y="593.2" width="1.9" height="1.9" fill="#a8b2bc" opacity="0.73"/><rect x="1134.4" y="567.4" width="1.5" height="1.5" fill="#a8b2bc" opacity="0.81"/><rect x="885.8" y="724.5" width="0.9" height="0.9" fill="#a8b2bc" opacity="0.90"/><rect x="1200.9" y="511.9" width="1.4" height="1.4" fill="#a8b2bc" opacity="0.73"/><rect x="1153.9" y="558.1" width="2.0" height="2.0" fill="#a8b2bc" opacity="0.53"/><rect x="784.8" y="782.7" width="0.8" height="0.8" fill="#a8b2bc" opacity="0.73"/><rect x="1082.2" y="591.5" width="1.1" height="1.1" fill="#a8b2bc" opacity="0.65"/><rect x="764.8" y="785.5" width="1.2" height="1.2" fill="#a8b2bc" opacity="1.00"/><rect x="842.0" y="765.4" width="1.1" height="1.1" fill="#a8b2bc" opacity="0.64"/><rect x="835.7" y="765.8" width="1.0" height="1.0" fill="#a8b2bc" opacity="0.65"/><rect x="853.7" y="765.9" width="0.8" height="0.8" fill="#a8b2bc" opacity="0.60"/><rect x="799.2" y="785.4" width="1.4" height="1.4" fill="#a8b2bc" opacity="0.54"/><rect x="1161.6" y="553.5" width="1.3" height="1.3" fill="#a8b2bc" opacity="0.66"/><rect x="778.6" y="788.4" width="1.0" height="1.0" fill="#a8b2bc" opacity="0.62"/><rect x="853.4" y="762.3" width="1.5" height="1.5" fill="#a8b2bc" opacity="0.84"/><rect x="907.5" y="714.7" width="1.8" height="1.8" fill="#a8b2bc" opacity="0.57"/><rect x="1161.6" y="548.2" width="2.2" height="2.2" fill="#a8b2bc" opacity="0.50"/><rect x="1136.2" y="567.3" width="1.1" height="1.1" fill="#a8b2bc" opacity="0.70"/><rect x="1151.2" y="554.3" width="2.2" height="2.2" fill="#a8b2bc" opacity="0.61"/><rect x="953.4" y="694.3" width="2.0" height="2.0" fill="#a8b2bc" opacity="0.69"/><rect x="820.9" y="775.8" width="1.1" height="1.1" fill="#a8b2bc" opacity="0.80"/><rect x="1035.1" y="623.4" width="1.6" height="1.6" fill="#a8b2bc" opacity="0.92"/><rect x="880.3" y="726.7" width="1.0" height="1.0" fill="#a8b2bc" opacity="0.95"/><rect x="1145.1" y="556.6" width="1.8" height="1.8" fill="#a8b2bc" opacity="0.97"/><rect x="912.0" y="714.8" width="1.5" height="1.5" fill="#a8b2bc" opacity="0.54"/><rect x="780.5" y="782.0" width="2.1" height="2.1" fill="#a8b2bc" opacity="0.62"/><rect x="1195.6" y="514.9" width="2.1" height="2.1" fill="#a8b2bc" opacity="0.75"/><rect x="1104.7" y="580.4" width="0.9" height="0.9" fill="#a8b2bc" opacity="0.61"/><rect x="1125.8" y="569.2" width="0.9" height="0.9" fill="#a8b2bc" opacity="0.61"/><rect x="911.4" y="712.0" width="1.4" height="1.4" fill="#a8b2bc" opacity="0.62"/><rect x="784.9" y="783.8" width="1.6" height="1.6" fill="#a8b2bc" opacity="0.57"/><rect x="1030.0" y="628.2" width="1.3" height="1.3" fill="#a8b2bc" opacity="0.87"/><rect x="1107.4" y="572.8" width="0.8" height="0.8" fill="#a8b2bc" opacity="0.51"/><rect x="1040.3" y="629.3" width="0.8" height="0.8" fill="#a8b2bc" opacity="0.82"/><rect x="1089.2" y="586.9" width="1.0" height="1.0" fill="#a8b2bc" opacity="0.54"/><rect x="1084.2" y="596.1" width="2.1" height="2.1" fill="#a8b2bc" opacity="0.87"/><rect x="1193.4" y="523.6" width="1.3" height="1.3" fill="#a8b2bc" opacity="0.54"/><rect x="1101.8" y="583.8" width="1.4" height="1.4" fill="#a8b2bc" opacity="0.90"/><rect x="1096.8" y="584.8" width="1.3" height="1.3" fill="#a8b2bc" opacity="0.79"/><rect x="1141.7" y="556.6" width="1.0" height="1.0" fill="#a8b2bc" opacity="0.63"/><rect x="1070.9" y="601.8" width="1.8" height="1.8" fill="#a8b2bc" opacity="0.79"/><rect x="1082.1" y="595.6" width="1.5" height="1.5" fill="#a8b2bc" opacity="0.76"/><rect x="1004.0" y="652.8" width="1.1" height="1.1" fill="#a8b2bc" opacity="0.85"/><rect x="1099.4" y="583.3" width="1.5" height="1.5" fill="#a8b2bc" opacity="0.95"/><rect x="1033.4" y="629.1" width="1.1" height="1.1" fill="#a8b2bc" opacity="0.58"/><rect x="1023.0" y="633.7" width="2.0" height="2.0" fill="#a8b2bc" opacity="0.66"/><rect x="1173.1" y="535.2" width="1.9" height="1.9" fill="#a8b2bc" opacity="0.88"/><rect x="914.8" y="713.6" width="1.6" height="1.6" fill="#a8b2bc" opacity="0.66"/><rect x="862.9" y="741.2" width="2.1" height="2.1" fill="#a8b2bc" opacity="0.52"/><rect x="850.6" y="761.8" width="1.0" height="1.0" fill="#a8b2bc" opacity="0.73"/><rect x="988.8" y="671.2" width="1.3" height="1.3" fill="#a8b2bc" opacity="0.76"/><rect x="1175.5" y="535.7" width="2.2" height="2.2" fill="#a8b2bc" opacity="0.73"/><rect x="846.2" y="763.4" width="1.7" height="1.7" fill="#a8b2bc" opacity="0.84"/><rect x="972.9" y="676.9" width="1.9" height="1.9" fill="#a8b2bc" opacity="0.51"/><rect x="868.8" y="735.1" width="1.9" height="1.9" fill="#a8b2bc" opacity="0.63"/><rect x="882.5" y="733.9" width="1.0" height="1.0" fill="#a8b2bc" opacity="0.55"/><rect x="1126.7" y="570.7" width="2.1" height="2.1" fill="#a8b2bc" opacity="0.84"/><rect x="913.4" y="713.0" width="1.8" height="1.8" fill="#a8b2bc" opacity="0.88"/><rect x="1124.6" y="565.6" width="1.2" height="1.2" fill="#a8b2bc" opacity="0.67"/><rect x="1206.3" y="505.7" width="2.2" height="2.2" fill="#a8b2bc" opacity="0.58"/><rect x="1203.5" y="503.3" width="2.1" height="2.1" fill="#a8b2bc" opacity="0.86"/><rect x="870.0" y="734.3" width="2.0" height="2.0" fill="#a8b2bc" opacity="0.50"/><rect x="1125.7" y="571.7" width="1.9" height="1.9" fill="#a8b2bc" opacity="0.97"/><rect x="1082.4" y="600.5" width="0.9" height="0.9" fill="#a8b2bc" opacity="0.93"/><rect x="1164.5" y="536.7" width="1.1" height="1.1" fill="#a8b2bc" opacity="0.70"/><rect x="852.8" y="763.3" width="1.9" height="1.9" fill="#a8b2bc" opacity="0.66"/><rect x="1203.8" y="506.2" width="0.9" height="0.9" fill="#a8b2bc" opacity="0.72"/><rect x="1120.4" y="568.1" width="2.1" height="2.1" fill="#a8b2bc" opacity="0.61"/><rect x="830.5" y="767.1" width="1.5" height="1.5" fill="#a8b2bc" opacity="0.84"/><rect x="874.5" y="740.0" width="2.1" height="2.1" fill="#a8b2bc" opacity="0.76"/><rect x="1184.1" y="530.6" width="1.5" height="1.5" fill="#a8b2bc" opacity="0.97"/><rect x="844.4" y="765.6" width="1.6" height="1.6" fill="#a8b2bc" opacity="0.92"/><rect x="1125.1" y="568.6" width="2.0" height="2.0" fill="#a8b2bc" opacity="0.78"/><rect x="1008.0" y="654.7" width="2.0" height="2.0" fill="#a8b2bc" opacity="0.80"/><rect x="1012.3" y="650.7" width="1.5" height="1.5" fill="#a8b2bc" opacity="0.79"/><rect x="906.6" y="714.4" width="0.8" height="0.8" fill="#a8b2bc" opacity="0.69"/><rect x="1130.3" y="566.6" width="1.4" height="1.4" fill="#a8b2bc" opacity="0.90"/><rect x="1130.1" y="562.5" width="1.0" height="1.0" fill="#a8b2bc" opacity="0.97"/><rect x="1083.5" y="599.3" width="2.1" height="2.1" fill="#a8b2bc" opacity="0.63"/><rect x="1094.4" y="583.4" width="2.1" height="2.1" fill="#a8b2bc" opacity="0.97"/><rect x="1093.6" y="581.4" width="1.4" height="1.4" fill="#a8b2bc" opacity="0.51"/><rect x="958.7" y="692.3" width="0.8" height="0.8" fill="#a8b2bc" opacity="0.60"/><rect x="916.5" y="711.9" width="1.8" height="1.8" fill="#a8b2bc" opacity="0.62"/><rect x="1091.8" y="589.7" width="1.0" height="1.0" fill="#a8b2bc" opacity="0.76"/><rect x="980.4" y="675.9" width="2.0" height="2.0" fill="#a8b2bc" opacity="0.51"/><rect x="1162.5" y="548.7" width="1.0" height="1.0" fill="#a8b2bc" opacity="0.60"/><rect x="1161.9" y="544.2" width="1.1" height="1.1" fill="#a8b2bc" opacity="0.77"/><rect x="1139.5" y="558.9" width="1.8" height="1.8" fill="#a8b2bc" opacity="0.91"/><rect x="889.7" y="723.1" width="2.1" height="2.1" fill="#a8b2bc" opacity="0.61"/><rect x="913.7" y="711.7" width="1.1" height="1.1" fill="#a8b2bc" opacity="0.86"/><circle cx="685" cy="750" r="3.5" fill="#d02020"/><circle cx="688" cy="748" r="2" fill="#e0c090"/></svg><svg class="r" style="left:570px;top:247px" width="16" height="16" viewBox="0 0 16 16"><rect x="0.7" y="0.7" width="12.6" height="12.6" rx="2" fill="none" stroke="#f0f0f0" stroke-width="1.2"/><path d="M3 15.2 H13 Q15.2 15.2 15.2 13 V3" fill="none" stroke="#f0f0f0" stroke-width="1.2"/><path d="M1 11 L5 7.3 L12.5 13" fill="none" stroke="#f0f0f0" stroke-width="1.2"/><path d="M10 2.3 V5.3 M8.5 3.8 H11.5" stroke="#f0f0f0" stroke-width="1"/></svg><div class="t" style="left:621.8px;top:250.23px;font-size:11.54px;color:#ffffff;font-weight:normal;">Gehweg bei BW511.PNG</div><svg class="r" style="left:832px;top:246px" width="18" height="18" viewBox="0 0 18 18"><path d="M8 15 H1.5 V1.5 H14.5 V7" fill="none" stroke="#f0f0f0" stroke-width="1.2"/><circle cx="10" cy="5" r="1.3" fill="none" stroke="#f0f0f0" stroke-width="1"/><path d="M2 13 L6.5 8.5 L9 11" fill="none" stroke="#f0f0f0" stroke-width="1.2"/><path d="M9 17 L10 13.5 L15.5 8 L17.5 10 L12 15.5 Z" fill="#f0f0f0"/></svg><svg class="r" style="left:872px;top:246px" width="18" height="18" viewBox="0 0 18 18"><path d="M1.5 8.5 A7 7 0 1 1 11 15.5" fill="none" stroke="#f0f0f0" stroke-width="1.3"/><path d="M8.5 13 L8.5 16.5 L12 16.5" fill="none" stroke="#f0f0f0" stroke-width="1.3"/><circle cx="9" cy="8.5" r="1.6" fill="none" stroke="#f0f0f0" stroke-width="1.2"/></svg><svg class="r" style="left:913px;top:246px" width="16" height="18" viewBox="0 0 16 18"><path d="M0.5 3 H15.5" stroke="#f0f0f0" stroke-width="1.3"/><path d="M6 2.5 V1 H10 V2.5" fill="none" stroke="#f0f0f0" stroke-width="1.1"/><path d="M2 3 L3.2 16.8 H12.8 L14 3" fill="none" stroke="#f0f0f0" stroke-width="1.3"/><path d="M6.3 6.5 V12.5 M9.7 6.5 V12.5" stroke="#f0f0f0" stroke-width="1.2"/></svg><div class="r" style="left:952px;top:255px;width:2.5px;height:2.5px;background:#f0f0f0;border-radius:50%"></div><div class="r" style="left:959.5px;top:255px;width:2.5px;height:2.5px;background:#f0f0f0;border-radius:50%"></div><div class="r" style="left:967px;top:255px;width:2.5px;height:2.5px;background:#f0f0f0;border-radius:50%"></div><svg class="r" style="left:1036px;top:247.5px" width="15" height="15" viewBox="0 0 15 15"><circle cx="6" cy="6" r="5" fill="none" stroke="#f0f0f0" stroke-width="1.2"/><path d="M9.8 9.8 L14 14" stroke="#f0f0f0" stroke-width="1.3"/><path d="M3.5 6 H8.5" stroke="#f0f0f0" stroke-width="1.2"/></svg><svg class="r" style="left:1076px;top:247.5px" width="15" height="15" viewBox="0 0 15 15"><circle cx="6" cy="6" r="5" fill="none" stroke="#f0f0f0" stroke-width="1.2"/><path d="M9.8 9.8 L14 14" stroke="#f0f0f0" stroke-width="1.3"/><path d="M3.5 6 H8.5" stroke="#f0f0f0" stroke-width="1.2"/><path d="M6 3.5 V8.5" stroke="#f0f0f0" stroke-width="1.2"/></svg><div class="t" style="left:1114px;top:247.83px;font-size:13.2px;color:#ffffff;font-weight:normal;">62 %</div><div class="r" style="left:1183px;top:247px;width:10px;height:1px;background:#f0f0f0;"></div><svg class="r" style="left:1228px;top:241px" width="12" height="12" viewBox="0 0 12 12"><rect x="1" y="1" width="10" height="10" fill="none" stroke="#f0f0f0" stroke-width="1.1"/></svg><svg class="r" style="left:1274px;top:241px" width="12" height="12" viewBox="0 0 12 12"><path d="M1 1 L11 11 M11 1 L1 11" stroke="#f0f0f0" stroke-width="1.1"/></svg><svg class="r" style="left:553px;top:354px" width="10" height="11" viewBox="0 0 10 11"><path d="M1 5.5 H9.5 M5 1 V10" stroke="#f0f0f0" stroke-width="1.4"/></svg><div class="r" style="left:553px;top:398.5px;width:10px;height:1px;background:#9a9a9a;"></div><div class="r" style="left:553px;top:435px;width:22px;height:22px;background:#3d5a80;"></div><div class="r" style="left:554px;top:440px;width:6px;height:13px;background:#f0f0f0;border-radius:1px"></div><div class="r" style="left:553px;top:439px;width:8px;height:1.5px;background:#f0f0f0;"></div><svg class="r" style="left:1296px;top:353px" width="8" height="14" viewBox="0 0 8 14"><ellipse cx="7" cy="3" rx="6" ry="2" fill="none" stroke="#f0f0f0" stroke-width="1.2"/><path d="M1 3 V11 Q7 14 13 11" fill="none" stroke="#f0f0f0" stroke-width="1.2"/></svg><svg class="r" style="left:577px;top:596px" width="7" height="10" viewBox="0 0 7 10"><path d="M5.5 1 L1.5 5 L5.5 9" stroke="#f0f0f0" stroke-width="1.4" fill="none"/></svg><svg class="r" style="left:1279px;top:596px" width="7" height="10" viewBox="0 0 7 10"><path d="M1.5 1 L5.5 5 L1.5 9" stroke="#f0f0f0" stroke-width="1.4" fill="none"/></svg><div class="r" style="left:1253.5px;top:354px;width:22.5px;height:165px;background:#3a3a3a;border-radius:11px;overflow:hidden"></div><div class="r" style="left:1253.5px;top:354px;width:22.5px;height:24.5px;background:#3d5a80;border-radius:11px 11px 0 0"></div><div class="r" style="left:1253.5px;top:377.6px;width:22.5px;height:1px;background:#303030;"></div><div class="r" style="left:1253.5px;top:401.2px;width:22.5px;height:1px;background:#303030;"></div><div class="r" style="left:1253.5px;top:424.8px;width:22.5px;height:1px;background:#303030;"></div><div class="r" style="left:1253.5px;top:448.4px;width:22.5px;height:1px;background:#303030;"></div><div class="r" style="left:1253.5px;top:472.0px;width:22.5px;height:1px;background:#303030;"></div><div class="r" style="left:1253.5px;top:495.6px;width:22.5px;height:1px;background:#303030;"></div><svg class="r" style="left:1254px;top:354.8px" width="22" height="22" viewBox="-11 -11 22 22"><path d="M-3.5 -6 L4.5 2 L0.8 2.3 L3 6.5 L1.2 7.3 L-1 3 L-3.5 5.5 Z" fill="none" stroke="#fff" stroke-width="1.2" stroke-linejoin="round"/></svg><svg class="r" style="left:1254px;top:378.4px" width="22" height="22" viewBox="-11 -11 22 22"><path d="M-4.5 5 L4.5 -5" stroke="#fff" stroke-width="1.2"/><circle cx="-4.8" cy="5.2" r="1.6" fill="#3a3a3a" stroke="#fff" stroke-width="1"/><circle cx="4.8" cy="-5.2" r="1.6" fill="#3a3a3a" stroke="#fff" stroke-width="1"/></svg><svg class="r" style="left:1254px;top:402.0px" width="22" height="22" viewBox="-11 -11 22 22"><rect x="-5.5" y="-5.5" width="11" height="11" fill="none" stroke="#fff" stroke-width="1.2"/><circle cx="-5.5" cy="-5.5" r="1.5" fill="#3a3a3a" stroke="#fff"/><circle cx="5.5" cy="-5.5" r="1.5" fill="#3a3a3a" stroke="#fff"/><circle cx="-5.5" cy="5.5" r="1.5" fill="#3a3a3a" stroke="#fff"/><circle cx="5.5" cy="5.5" r="1.5" fill="#3a3a3a" stroke="#fff"/></svg><svg class="r" style="left:1254px;top:425.6px" width="22" height="22" viewBox="-11 -11 22 22"><circle cx="0" cy="0" r="6" fill="none" stroke="#fff" stroke-width="1.3"/><circle cx="6" cy="0" r="1.6" fill="#3a3a3a" stroke="#fff"/></svg><svg class="r" style="left:1254px;top:449.2px" width="22" height="22" viewBox="-11 -11 22 22"><ellipse cx="0" cy="-4" rx="6.5" ry="2.3" fill="none" stroke="#fff" stroke-width="1.2"/><path d="M-6.5 -4 V4 A6.5 2.3 0 0 0 6.5 4 V-4" fill="none" stroke="#fff" stroke-width="1.2"/><path d="M-4 1.5 H4" stroke="#fff" stroke-dasharray="1 1"/></svg><svg class="r" style="left:1254px;top:472.8px" width="22" height="22" viewBox="-11 -11 22 22"><path d="M0 6.5 L-4.5 -0.5 A5 5 0 1 1 4.5 -0.5 Z" fill="#fff"/><circle cx="0" cy="-2.3" r="1.5" fill="#3a3a3a"/></svg><svg class="r" style="left:1254px;top:496.4px" width="22" height="22" viewBox="-11 -11 22 22"><circle cx="0" cy="0" r="5.5" fill="none" stroke="#fff" stroke-width="1.3"/><path d="M0 -7.5 V-5 M0 5 V7.5 M-7.5 0 H-5 M5 0 H7.5" stroke="#fff" stroke-width="1.3"/></svg><div class="r" style="left:597.6px;top:824.8px;width:49.4px;height:22.6px;background:#3a3a3a;border-radius:11.3px"></div><div class="r" style="left:622.3px;top:824.8px;width:24.7px;height:22.6px;background:#3d5a80;border-radius:0 11.3px 11.3px 0"></div><div class="t" style="left:603px;top:832.03px;font-size:10px;color:#f0f0f0;font-weight:bold;">2D</div><div class="t" style="left:627.5px;top:832.03px;font-size:10px;color:#f0f0f0;font-weight:bold;">3D</div><div class="r" style="left:658.3px;top:824.8px;width:22.6px;height:22.6px;background:#3a3a3a;border-radius:50%"></div><svg class="r" style="left:661.5px;top:828px" width="16" height="16" viewBox="-8 -8 16 16"><g fill="#fff"><rect x="-1.6" y="-7.3" width="3.2" height="4" transform="rotate(0)"/><rect x="-1.6" y="-7.3" width="3.2" height="4" transform="rotate(45)"/><rect x="-1.6" y="-7.3" width="3.2" height="4" transform="rotate(90)"/><rect x="-1.6" y="-7.3" width="3.2" height="4" transform="rotate(135)"/><rect x="-1.6" y="-7.3" width="3.2" height="4" transform="rotate(180)"/><rect x="-1.6" y="-7.3" width="3.2" height="4" transform="rotate(225)"/><rect x="-1.6" y="-7.3" width="3.2" height="4" transform="rotate(270)"/><rect x="-1.6" y="-7.3" width="3.2" height="4" transform="rotate(315)"/><circle r="5.3"/></g><circle r="2.2" fill="#3a3a3a"/></svg><div class="r" style="left:692.8px;top:824.8px;width:138.2px;height:22.6px;background:#3a3a3a;border-radius:11.3px"></div><div class="r" style="left:762px;top:824.8px;width:23.2px;height:22.6px;background:#3d5a80;"></div><div class="r" style="left:715.7px;top:824.8px;width:1px;height:22.6px;background:#2e2e2e;"></div><div class="r" style="left:738.6px;top:824.8px;width:1px;height:22.6px;background:#2e2e2e;"></div><div class="r" style="left:761.9px;top:824.8px;width:1px;height:22.6px;background:#2e2e2e;"></div><div class="r" style="left:785.2px;top:824.8px;width:1px;height:22.6px;background:#2e2e2e;"></div><div class="r" style="left:808.4px;top:824.8px;width:1px;height:22.6px;background:#2e2e2e;"></div><svg class="r" style="left:696.2px;top:828px" width="16" height="16" viewBox="-8 -8 16 16"><path d="M-5.5 0 L4 -6 M-5.5 0 L4 6 M4 -6 V6" stroke="#fff" stroke-width="1.3" fill="none"/><path d="M0 -2.5 Q1.5 0 0 2.5 M2 -4 Q4 0 2 4" stroke="#fff" stroke-width="1.1" fill="none"/></svg><svg class="r" style="left:719.3px;top:828px" width="16" height="16" viewBox="-8 -8 16 16"><path d="M-6.5 -3.5 H-3 L-1.8 -5.5 H1.8 L3 -3.5 H6.5 V5.5 H-6.5 Z" fill="#fff"/><circle cx="0" cy="1" r="2.7" fill="#3a3a3a"/><circle cx="0" cy="1" r="1.6" fill="#fff"/></svg><svg class="r" style="left:742.4px;top:828px" width="16" height="16" viewBox="-8 -8 16 16"><circle r="5" fill="none" stroke="#8a8a8a" stroke-width="1.2"/><circle r="2.2" fill="#8a8a8a"/><path d="M0 -7 V-5 M0 5 V7 M-7 0 H-5 M5 0 H7" stroke="#8a8a8a" stroke-width="1.2"/></svg><svg class="r" style="left:765.5px;top:828px" width="16" height="16" viewBox="-8 -8 16 16"><path d="M-6 -3 V-6 H-3 M3 -6 H6 V-3 M6 3 V6 H3 M-3 6 H-6 V3" stroke="#fff" stroke-width="1.4" fill="none"/><circle r="1.8" fill="#fff"/></svg><svg class="r" style="left:788.6px;top:828px" width="16" height="16" viewBox="-8 -8 16 16"><circle cx="-1.5" cy="-1.5" r="4.5" fill="none" stroke="#fff" stroke-width="1.3"/><path d="M1.8 1.8 L6 6" stroke="#fff" stroke-width="1.6"/><path d="M-3.8 -1.5 H0.8 M-1.5 -3.8 V0.8" stroke="#fff" stroke-width="1.1"/></svg><svg class="r" style="left:811.7px;top:828px" width="16" height="16" viewBox="-8 -8 16 16"><circle cx="-1.5" cy="-1.5" r="4.5" fill="none" stroke="#fff" stroke-width="1.3"/><path d="M1.8 1.8 L6 6" stroke="#fff" stroke-width="1.6"/><path d="M-3.8 -1.5 H0.8" stroke="#fff" stroke-width="1.1"/></svg>
</body></html>
